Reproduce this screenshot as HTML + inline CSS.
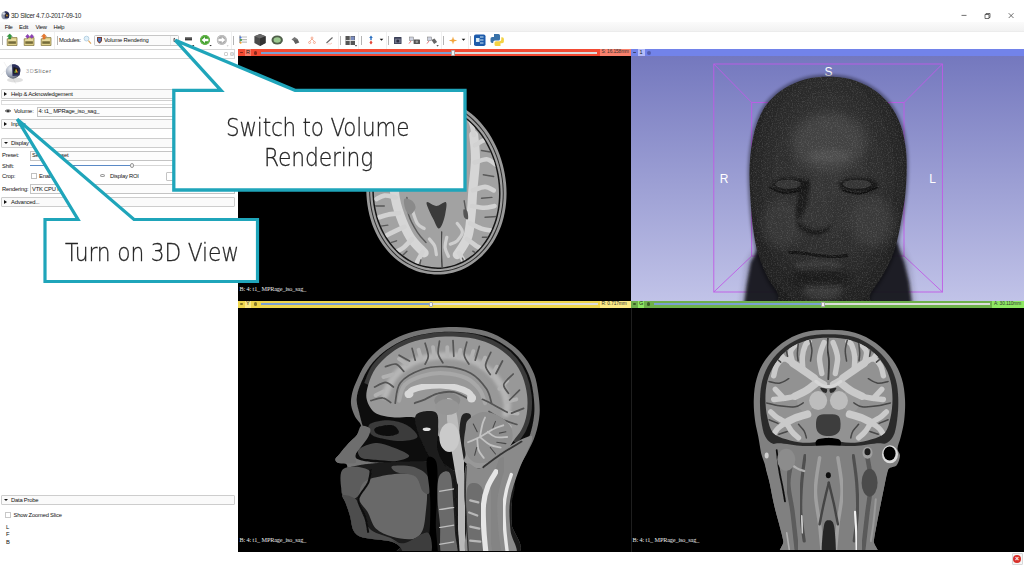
<!DOCTYPE html>
<html><head><meta charset="utf-8"><title>3D Slicer 4.7.0-2017-09-10</title>
<style>
*{margin:0;padding:0;box-sizing:border-box}
html,body{width:1024px;height:576px;overflow:hidden;background:#fff}
body{position:relative;font-family:"Liberation Sans",sans-serif;font-size:5.800px;letter-spacing:-.2px;color:#111}
.a{position:absolute}
.t{position:absolute;white-space:nowrap;line-height:1;margin-top:.8px}
.ct{margin-top:0}
#menubar{left:0;top:22px;width:1024px;height:10px;background:linear-gradient(#fbfbfb,#f1f1f1)}
.grp{position:absolute;left:.5px;width:234.500px;height:7px;border:1px solid #cdcdcd;border-radius:1px;background:#fafafa}
.inp{position:absolute;height:8px;border:1px solid #c4c4c4;background:#fcfcfc}
.bar{position:absolute;height:7px}
.view{position:absolute;background:#000;overflow:hidden}
.lbl{position:absolute;white-space:nowrap;line-height:1;font-family:"Liberation Serif",serif;font-size:6.200px;letter-spacing:-.12px;color:#ececec}
.sep{top:36px;width:1.400px;height:9px;background:#b4b4b4}
.tri-r{position:absolute;width:0;height:0;border-left:3px solid #111;border-top:2.200px solid transparent;border-bottom:2.200px solid transparent}
.tri-d{position:absolute;width:0;height:0;border-top:2.500px solid #111;border-left:2.200px solid transparent;border-right:2.200px solid transparent}
</style></head><body>

<!-- title bar -->
<svg class="a" style="left:1px;top:10px" width="9" height="10" viewBox="0 0 9 10"><circle cx="4.300" cy="5.400" r="3.900" fill="#8e96a8"/><path d="M3.600 1.500c2.500-.6 4.600 1 4.800 3.400l-.6 3-4 .3z" fill="#2b2f5a"/><path d="M4.600 3.200l2.800.8-.4 2.800-2.500.2z" fill="#222"/><path d="M5 6.300l.9-2.300 1.100 2.300z" fill="#e8a030"/><ellipse cx="3" cy="3.600" rx="1.600" ry="1.200" fill="#e4e8ee" opacity=".8"/></svg>
<div class="t" style="left:11px;top:12.200px;font-size:6.400px;letter-spacing:-.26px;color:#2a2a2a">3D Slicer 4.7.0-2017-09-10</div>
<svg class="a" style="left:955px;top:8px" width="64" height="14" viewBox="955 8 64 14"><g fill="none" stroke="#333" stroke-width=".7"><path d="M961.500 15.400h5"/><path d="M985 14.500h4v4h-4zM986 14.500v-1h4v4h-1"/><path d="M1008.700 13.200l4.800 4.800M1013.500 13.200l-4.800 4.800"/></g></svg>

<!-- menu bar -->
<div class="a" id="menubar"></div>
<div class="t" style="left:4.800px;top:24.200px;letter-spacing:-.45px">File</div>
<div class="t" style="left:19px;top:24.200px">Edit</div>
<div class="t" style="left:35.600px;top:24.200px;letter-spacing:-.4px">View</div>
<div class="t" style="left:53.500px;top:24.200px;letter-spacing:-.3px">Help</div>

<!-- toolbar -->
<div id="toolbar">
<div class="a" style="left:0;top:32px;width:1024px;height:17px;background:#fff"></div>
<div class="a" style="left:0;top:31px;width:1024px;height:1px;background:#ececec"></div>
<!-- separators -->
<div class="a sep" style="left:2px"></div><div class="a sep" style="left:57px"></div><div class="a sep" style="left:233px"></div>
<div class="a sep" style="left:340px"></div><div class="a sep" style="left:361px"></div><div class="a sep" style="left:388px"></div>
<div class="a sep" style="left:443px"></div><div class="a sep" style="left:470px"></div>
<div class="a" style="left:54px;top:32px;width:1px;height:17px;background:#f0f0f0"></div>
<div class="a" style="left:231px;top:32px;width:1px;height:17px;background:#f0f0f0"></div>
<div class="a" style="left:338px;top:32px;width:1px;height:17px;background:#f0f0f0"></div>
<div class="a" style="left:358px;top:32px;width:1px;height:17px;background:#f0f0f0"></div>
<div class="a" style="left:385.500px;top:32px;width:1px;height:17px;background:#f0f0f0"></div>
<div class="a" style="left:441px;top:32px;width:1px;height:17px;background:#f0f0f0"></div>
<div class="a" style="left:467.500px;top:32px;width:1px;height:17px;background:#f0f0f0"></div>
<svg class="a" style="left:0;top:32px" width="520" height="17" viewBox="0 32 520 17">
<!-- data folders -->
<g><path d="M7.200 38.800h3.200l.9-1.200h5.700v7.900H7.200z" fill="#e0d08a" stroke="#7d7038" stroke-width=".7"/><rect x="8.300" y="41.300" width="7.600" height="2.500" fill="#5a5228" opacity=".8"/><rect x="8.300" y="39.600" width="7.600" height=".8" fill="#f2e8b8"/></g>
<path d="M9.700 33.800l2.700 2.700h-1.500v2.400H8.500v-2.400H7z" fill="#2f9a3c" stroke="#1d6a28" stroke-width=".3"/>
<g transform="translate(17 0)"><path d="M7.200 38.800h3.200l.9-1.200h5.700v7.900H7.200z" fill="#e0d08a" stroke="#7d7038" stroke-width=".7"/><rect x="8.300" y="41.300" width="7.600" height="2.500" fill="#5a5228" opacity=".8"/><rect x="8.300" y="39.600" width="7.600" height=".8" fill="#f2e8b8"/></g><path d="M27.600 34.300l2 2.100-2 2.100-2-2.100zM31.800 34.300l2 2.100-2 2.100-2-2.100z" fill="#9040b8" stroke="#5e2880" stroke-width=".3"/>
<g transform="translate(34 0)"><path d="M7.200 38.800h3.200l.9-1.200h5.700v7.900H7.200z" fill="#e0d08a" stroke="#7d7038" stroke-width=".7"/><rect x="8.300" y="41.300" width="7.600" height="2.500" fill="#5a5228" opacity=".8"/><rect x="8.300" y="39.600" width="7.600" height=".8" fill="#f2e8b8"/></g><path d="M44 33.800l2.700 2.700h-1.500v2.600h-2.400v-2.600h-1.500z" fill="#ec7a2c" stroke="#b0501a" stroke-width=".3"/>
<!-- magnifier -->
<circle cx="86.5" cy="38.6" r="2.4" fill="#dff0fa" stroke="#a9c8dc" stroke-width=".8"/><path d="M88.4 40.6l2.6 3" stroke="#e0a860" stroke-width="1.2"/>
<!-- combobox -->
<rect x="94.5" y="35.5" width="84" height="10" rx="1" fill="#fbfbfb" stroke="#b9b9b9" stroke-width=".8"/>
<path d="M170.5 36v9" stroke="#dcdcdc" stroke-width=".6"/>
<path d="M97 37h5v3.2c0 2-2.5 3.2-2.500 3.200s-2.500-1.200-2.500-3.200z" fill="#7a4030"/><path d="M98 38h3v2.300c0 1.200-1.500 2-1.500 2s-1.500-.8-1.500-2z" fill="#4a78c8"/>
<path d="M173 39.400h2.600l-1.300-1.700zM173 40.600h2.600l-1.300 1.700z" fill="#333"/>
<!-- history -->
<rect x="185" y="37.400" width="7" height="3" fill="#3c3c3c"/><rect x="185" y="37.400" width="7" height="1" fill="#777"/>
<path d="M192 45h2.400l-1.200 1.300z" fill="#222"/>
<!-- back / forward -->
<circle cx="205" cy="40" r="5" fill="#3e9a2a"/><circle cx="205" cy="40" r="4.200" fill="none" stroke="#7bc85c" stroke-width=".8"/>
<path d="M201.600 40l3.400-3v1.800h3.400v2.400h-3.400V43z" fill="#fff"/>
<path d="M209.400 45h2.400l-1.200 1.300z" fill="#222"/>
<circle cx="221.800" cy="40" r="5" fill="#a9a9a9"/><circle cx="221.800" cy="40" r="4.200" fill="none" stroke="#d0d0d0" stroke-width=".8"/>
<path d="M225.200 40l-3.400-3v1.800h-3.400v2.400h3.400V43z" fill="#fff"/>
<path d="M226.600 45.400h2l-1 1.100z" fill="#aaa"/>
<!-- tree -->
<path d="M241.500 37h5.500M241.500 39.600h5.500M241.500 42.200h5.500" stroke="#bdbdbd" stroke-width="1.200"/><path d="M240 35.500v7.500" stroke="#444" stroke-width=".8"/>
<circle cx="240.600" cy="37.500" r="1" fill="#4a7be0"/><circle cx="241" cy="40" r="1.100" fill="#3f9a3f"/><circle cx="240.600" cy="42.800" r="1" fill="#f0a030"/>
<!-- cube -->
<path d="M260 34l5.600 2.200v6.800L260 46l-5.600-3v-6.800z" fill="#4a4a4a"/><path d="M260 34l5.600 2.200L260 38.600l-5.600-2.400z" fill="#6a6a6a"/><path d="M260 38.600V46l5.600-3v-6.800z" fill="#333"/>
<!-- oval -->
<ellipse cx="277.200" cy="40" rx="5.700" ry="4.600" fill="#4f5f4a"/><ellipse cx="277.200" cy="40" rx="3.600" ry="2.800" fill="#9cc890"/>
<!-- transforms -->
<path d="M291.500 39.500l3-2.500 3 2-3 2.500z" fill="#777"/><path d="M293.500 40.500l4-1.500 1.800 3.500-4 1.500z" fill="#5e5e5e"/>
<!-- hierarchy -->
<g fill="none" stroke="#f29a7c" stroke-width=".8"><circle cx="312" cy="38" r="1"/><circle cx="309.600" cy="42.500" r="1"/><circle cx="314.400" cy="42.500" r="1"/><path d="M312 39l-2.400 2.500M312 39l2.400 2.500"/></g>
<!-- pencil -->
<path d="M326.500 43l6-5.500" stroke="#666" stroke-width="1.100"/><path d="M327.500 44.200c1.500-1 2.500.8 4.500-1.200" stroke="#f0a090" stroke-width=".6" fill="none"/>
<!-- layout -->
<rect x="345.500" y="36" width="9.500" height="9" fill="#555"/><path d="M350.200 36v9M345.500 40.500h9.500" stroke="#e8e8e8" stroke-width=".9"/><rect x="351" y="36.500" width="3.500" height="3.500" fill="#7a8cc0"/>
<path d="M354.800 45.300h2.400l-1.200 1.300z" fill="#222"/>
<!-- crosshair arrows -->
<path d="M371 35.600l1.800 2.400h-1.100v2h-1.400v-2h-1.100z" fill="#2a6fc0"/><path d="M371 44.400l1.700-2.200h-1v-1.400h-1.400v1.400h-1z" fill="#e03a2a"/>
<path d="M379.700 38.800h3.600l-1.800 2z" fill="#111"/>
<!-- capture -->
<rect x="394" y="37" width="7.500" height="7" rx=".6" fill="#3a3f55"/><rect x="394.800" y="38.600" width="5.900" height="4.600" fill="#70748a"/><circle cx="397.800" cy="41" r="1.500" fill="#2b2f42"/>
<rect x="409.500" y="37" width="4" height="3.600" fill="#cfd3e0" stroke="#777" stroke-width=".5"/><path d="M409 43.600l2-2.600" stroke="#d04040" stroke-width=".7"/><rect x="413.600" y="39.600" width="6.400" height="4.400" rx=".6" fill="#555"/><circle cx="416.800" cy="41.800" r="1.300" fill="#999"/>
<rect x="427.500" y="37" width="4" height="3.600" fill="#cfd3e0" stroke="#777" stroke-width=".5"/><path d="M427 43.600l2-2.600" stroke="#d04040" stroke-width=".7"/><path d="M431.500 40l3-1.400 2.600 3.400-3 2z" fill="#666"/>
<path d="M436.400 45.300h2.400l-1.200 1.300z" fill="#222"/>
<!-- star -->
<path d="M453 36.400l.9 3.200 3.300.9-3.300.9-.9 3.200-.9-3.200-3.300-.9 3.300-.9z" fill="#f2a43a"/>
<path d="M461.700 38.800h3.600l-1.800 2z" fill="#111"/>
<!-- extension -->
<rect x="474" y="34.500" width="11.500" height="11.500" rx="1.800" fill="#1d5bab"/><path d="M476.500 38.500h2.500v3h-2.500zM480 37h3.500M480 40h3.500M480 43h3.500" stroke="#cfe8f4" stroke-width="1.100" fill="#e8eef6"/>
<!-- python -->
<path d="M494 34h4.500a1.500 1.500 0 0 1 1.500 1.500V39a1.500 1.500 0 0 1-1.500 1.500H495a1.800 1.800 0 0 0-1.800 1.800v.7h-.9a1.800 1.800 0 0 1-1.800-1.800v-2.400a1.800 1.800 0 0 1 1.800-1.800h1.700z" fill="#3a72a8"/>
<path d="M500.500 46H496a1.500 1.500 0 0 1-1.500-1.500V42.800A1.500 1.500 0 0 1 496 41.300h3.500a1.800 1.800 0 0 0 1.800-1.800v-2.300h.8a1.800 1.800 0 0 1 1.800 1.800v2.400a1.800 1.800 0 0 1-1.800 1.800h-1.600z" fill="#f3d244"/>
</svg>
<div class="t" style="left:59px;top:37px">Modules:</div>
<div class="t" style="left:104px;top:37px">Volume Rendering</div>
</div>

<!-- left panel -->
<div id="panel">
<!-- dock title -->
<div class="a" style="left:0;top:48.800px;width:235px;height:10.200px;border:1px solid #d6d6d6;border-left:none;background:#fff"></div>
<div class="a" style="left:223.500px;top:52px;width:4px;height:4px;border:1px solid #cfcfcf;border-radius:1px"></div>
<div class="a" style="left:230px;top:52px;width:4px;height:4px;border:1px solid #cfcfcf;border-radius:1px;font-size:4px;line-height:2px;text-align:center;color:#aaa">x</div>
<!-- logo -->
<svg class="a" style="left:0;top:60px" width="60" height="24" viewBox="0 60 60 24">
<defs><radialGradient id="lg" cx=".35" cy=".3" r=".8"><stop offset="0" stop-color="#e8ecf2"/><stop offset=".6" stop-color="#9aa3b5"/><stop offset="1" stop-color="#4c5060"/></radialGradient></defs>
<path d="M1 75l14-15M4 62l12 22" stroke="#e4e4e4" stroke-width=".5"/>
<ellipse cx="15" cy="80" rx="8" ry="2.500" fill="#000" opacity=".12"/>
<circle cx="13" cy="71.500" r="7.200" fill="url(#lg)"/>
<path d="M12 64.500c4-1 8 1.500 8.500 5.500l-1 5.500-7 .5z" fill="#2b2f5a"/>
<path d="M13.500 67l5 1.500-.8 5-4.400.3z" fill="#1a1a1a"/><path d="M14.500 72.500l1.500-4 2 4z" fill="#e8a030"/><path d="M14.300 72.600l1.200-2.600.8 2.600z" fill="#4aa84a"/>
</svg>
<div class="t" style="left:26px;top:68.500px;font-size:5.500px;letter-spacing:.6px;color:#555"><span style="color:#aaa">3D</span>Slicer</div>
<!-- help -->
<div class="grp" style="top:89px;height:10px"></div>
<div class="tri-r" style="left:4px;top:91.500px"></div>
<div class="t" style="left:11px;top:91px">Help &amp; Acknowledgement</div>
<div class="a" style="left:1px;top:99.500px;width:234px;height:5.500px;border:1px solid #dedede;border-top-color:#cfcfcf"></div>
<!-- volume -->
<svg class="a" style="left:4.500px;top:108.500px" width="6" height="4.500" viewBox="0 0 7 5"><path d="M0 2.500C1.500 .5 5.500 .5 7 2.500 5.500 4.500 1.500 4.500 0 2.500z" fill="#8a8a8a"/><circle cx="3.500" cy="2.400" r="1.300" fill="#333"/><path d="M0 2.300C1.500 .3 5.500 .3 7 2.300" stroke="#444" stroke-width=".9" fill="none"/></svg>
<div class="t" style="left:14px;top:108px">Volume:</div>
<div class="inp" style="left:36.500px;top:107px;width:198px;height:10px"></div>
<div class="t" style="left:38.500px;top:108.500px">4: t1_ MPRage_iso_sag_</div>
<!-- inputs -->
<div class="grp" style="top:119px;height:10px"></div>
<div class="tri-r" style="left:4px;top:121.500px"></div>
<div class="t" style="left:11px;top:121px">Inputs</div>
<!-- display -->
<div class="grp" style="top:138px;height:10px"></div>
<div class="tri-d" style="left:3.500px;top:141.500px"></div>
<div class="t" style="left:11px;top:140px">Display</div>
<div class="t" style="left:2px;top:152px">Preset:</div>
<div class="inp" style="left:29.500px;top:150.500px;width:205px;height:10px"></div>
<div class="t" style="left:32px;top:152px">Select a Preset</div>
<div class="t" style="left:2px;top:163px">Shift:</div>
<div class="a" style="left:30px;top:164.500px;width:102px;height:1.500px;background:#5b8ac6"></div>
<div class="a" style="left:132px;top:164.500px;width:100px;height:1.500px;background:#d6d6d6"></div>
<div class="a" style="left:129.500px;top:163px;width:4.500px;height:4.500px;border-radius:50%;border:1px solid #9a9a9a;background:#f4f4f4"></div>
<div class="t" style="left:2px;top:173px">Crop:</div>
<div class="a" style="left:30.500px;top:172.500px;width:6px;height:6px;border:1px solid #c0c0c0;background:#fff"></div>
<div class="t" style="left:39px;top:173px">Enable</div>
<div class="a" style="left:100px;top:174px;width:4.500px;height:3px;border:1px solid #999;border-radius:50%"></div>
<div class="t" style="left:110px;top:173px">Display ROI</div>
<div class="a" style="left:166px;top:171.500px;width:68px;height:9px;border:1px solid #c4c4c4;border-radius:1px"></div>
<div class="t" style="left:2px;top:186px">Rendering:</div>
<div class="inp" style="left:29.500px;top:184px;width:205px;height:10px"></div>
<div class="t" style="left:32px;top:186px">VTK CPU Ray Casting</div>
<!-- advanced -->
<div class="grp" style="top:197px;height:10px"></div>
<div class="tri-r" style="left:4px;top:199.500px"></div>
<div class="t" style="left:11px;top:199px">Advanced...</div>
<!-- data probe -->
<div class="grp" style="top:494.500px;height:10.500px"></div>
<div class="tri-d" style="left:3.500px;top:498.500px"></div>
<div class="t" style="left:11px;top:497px">Data Probe</div>
<div class="a" style="left:5px;top:511.500px;width:6px;height:6px;border:1px solid #c8c8c8;background:#fff"></div>
<div class="t" style="left:13.500px;top:512px">Show Zoomed Slice</div>
<div class="t" style="left:6px;top:524px">L</div>
<div class="t" style="left:6px;top:531.500px">F</div>
<div class="t" style="left:6px;top:539.500px">B</div>
</div>

<!-- views -->
<div id="views">
<div class="view" style="left:238px;top:56px;width:393px;height:245px"></div>
<div class="view" style="left:238px;top:308px;width:786px;height:244px"></div>
<div class="a" style="left:631px;top:56px;width:393px;height:245px;background:linear-gradient(#7478be,#c1c3e8)"></div>
<svg class="a" style="left:238px;top:308px" width="393" height="244" viewBox="238 308 393 244">
<defs><filter id="sb0" x="-10%" y="-10%" width="120%" height="120%"><feGaussianBlur stdDeviation="0.45"/></filter><filter id="sb1" x="-10%" y="-10%" width="120%" height="120%"><feGaussianBlur stdDeviation="0.7"/></filter><filter id="sb2" x="-10%" y="-10%" width="120%" height="120%"><feGaussianBlur stdDeviation="1.6"/></filter><filter id="sb3" x="-20%" y="-20%" width="140%" height="140%"><feGaussianBlur stdDeviation="3"/></filter><clipPath id="sagclip"><rect x="238" y="308" width="318" height="243"/></clipPath>
<clipPath id="sagbrain"><path d="M366.7 399.3C365.6 394.7 366.8 390 368.3 384.8C369.9 379.5 372.2 373.3 375.8 368.1C379.5 362.9 384.9 357.7 390.4 353.5C396 349.3 402.2 345.7 409.2 343.1C416.1 340.4 424.1 338.7 432.1 337.7C440.1 336.6 449.1 336.4 457.1 336.8C465.1 337.2 473.1 338.2 480 340.2C486.9 342.1 493.2 345 498.8 348.5C504.3 352 509.4 356.3 513.3 361C517.3 365.7 520.2 370.7 522.5 376.4C524.8 382.1 526.4 388.9 527.1 395.2C527.8 401.4 527.6 408.2 526.7 413.9C525.8 419.6 523.9 424.8 521.7 429.3C519.4 433.8 516.1 437 513.3 441C510.6 445 508.8 449.5 505 453.5C501.2 457.5 495.3 462.7 490.4 465.2C485.6 467.7 480 468.9 475.8 468.5C471.7 468.1 468.9 465.5 465.4 462.7C461.9 459.8 459.4 455.7 455 451.4C450.6 447.1 443.7 441.7 439.2 436.8C434.7 432 432.2 425.5 427.9 422.2C423.6 419 419.2 418.1 413.3 417.2C407.4 416.4 398.9 418 392.5 417.2C386.1 416.5 379.3 415.7 375 412.7C370.7 409.7 367.8 404 366.7 399.3Z"/></clipPath></defs>
<rect x="238" y="308" width="393" height="244" fill="#000"/>
<g clip-path="url(#sagclip)">
<path d="M355 416.4C353.3 413 351.8 409.1 351.2 405.6C350.7 402 350.9 399 351.7 395.2C352.4 391.3 353.5 387.9 355.8 382.7C358.1 377.5 361.4 369.6 365.4 363.9C369.4 358.2 374.4 353 380 348.5C385.6 344 392.2 339.9 398.8 336.8C405.3 333.8 411.9 331.8 419.6 330.2C427.2 328.6 436.3 327.6 444.6 327.2C452.9 326.9 461.6 327 469.6 328.1C477.6 329.1 485.6 330.8 492.5 333.5C499.4 336.2 505.8 340.3 511.2 344.3C516.7 348.4 521.2 352.7 525 357.7C528.8 362.7 531.9 368.4 534.2 374.3C536.4 380.2 537.4 386.5 538.3 393.1C539.2 399.7 540.1 407 539.6 413.9C539.1 420.9 537.4 428.5 535.4 434.8C533.5 441 530.6 446.1 527.9 451.4C525.3 456.8 521.9 461.6 519.6 466.8C517.3 472 515.5 476.6 514.2 482.7C512.8 488.8 512.1 496.6 511.7 503.5C511.2 510.4 511.4 515.7 511.7 524.3C511.9 533 531.1 550.4 513.3 555.6C495.6 560.8 423.9 557 405 555.6C386.1 554.1 402.4 549.2 400 546.8C397.6 544.5 395.5 542.7 390.8 541.4C386.2 540.1 377.2 539.7 372.1 538.9C367 538.2 363.5 538.3 360.4 536.8C357.3 535.4 355.1 533.6 353.3 530.2C351.6 526.7 351.2 520.4 350 516C348.8 511.6 347.2 507.3 345.8 503.5C344.4 499.7 342.2 496.2 341.7 493.1C341.1 490 342.5 487.5 342.5 484.8C342.5 482 340.9 479.2 341.7 476.4C342.4 473.6 346.5 470.2 347.1 468.1C347.7 465.9 346.9 464.4 345.4 463.5C343.9 462.6 339.6 463.4 337.9 462.7C336.2 461.9 335.1 460.4 335.4 458.9C335.7 457.5 337.4 456.6 339.6 453.9C341.8 451.3 345.9 446.2 348.8 443.1C351.6 440 354.6 438 356.7 435.2C358.8 432.3 361.5 429.1 361.2 426C361 422.9 356.7 419.8 355 416.4Z" fill="#757575" filter="url(#sb1)"/>
<path d="M360 416C358.8 409.8 356.5 404.8 356.7 399.3C356.8 393.9 358.6 389.1 360.8 383.5C363.1 377.9 366.2 371.2 370 366C373.8 360.8 378.2 356.3 383.3 352.2C388.5 348.2 394.6 344.3 400.8 341.4C407.1 338.5 413.5 336.3 420.8 334.8C428.1 333.2 436.6 332.2 444.6 331.8C452.6 331.5 461 331.7 468.8 332.7C476.5 333.6 484.2 335.2 490.8 337.7C497.4 340.2 503.3 343.9 508.3 347.7C513.3 351.4 517.4 355.5 520.8 360.2C524.3 364.8 527.1 370 529.2 375.6C531.3 381.1 532.5 387.1 533.3 393.5C534.2 399.9 534.7 407.2 534.2 413.9C533.7 420.6 532.2 427.6 530.4 433.5C528.6 439.4 526.2 444.5 523.3 449.3C520.5 454.2 517.4 459.1 513.3 462.7C509.2 466.3 505 469.1 498.8 471C492.5 472.9 483.1 474.3 475.8 474.3C468.5 474.3 461.6 473.1 455 471C448.4 468.9 443.2 463.2 436.2 461.8C429.3 460.4 422.7 462.5 413.3 462.7C404 462.8 389 463.2 380 462.7C371 462.2 363.2 461.3 359.2 459.8C355.1 458.2 355 457.3 355.8 453.5C356.7 449.7 363.5 443.1 364.2 436.8C364.9 430.6 361.2 422.2 360 416Z" fill="#101010" filter="url(#sb1)"/>
<path d="M368.3 384.8C369.6 382 372.2 373.3 375.8 368.1C379.5 362.9 384.9 357.7 390.4 353.5C396 349.3 402.2 345.7 409.2 343.1C416.1 340.4 424.1 338.7 432.1 337.7C440.1 336.6 449.1 336.4 457.1 336.8C465.1 337.2 473.1 338.2 480 340.2C486.9 342.1 493.2 345 498.8 348.5C504.3 352 509.4 356.3 513.3 361C517.3 365.7 520.2 370.7 522.5 376.4C524.8 382.1 526.4 388.9 527.1 395.2C527.8 401.4 527.6 408.2 526.7 413.9C525.8 419.6 523.9 424.8 521.7 429.3C519.4 433.8 514.7 439.1 513.3 441" fill="none" stroke="#3a3a3a" stroke-width="9" filter="url(#sb1)"/>
<path d="M347.1 468.1C353.5 465.8 365.1 463.7 380 462.7C394.9 461.6 423.8 460.4 436.2 461.8C448.8 463.2 448.4 468.9 455 471C461.6 473.1 468.5 474.3 475.8 474.3C483.1 474.3 492.4 469.6 498.8 471C505.1 472.4 512 477.2 514.2 482.7C516.3 488.1 512.1 496.6 511.7 503.5C511.2 510.4 511.4 515.7 511.7 524.3C511.9 533 531.1 550.4 513.3 555.6C495.6 560.8 423.9 557 405 555.6C386.1 554.1 402.4 549.2 400 546.8C397.6 544.5 395.5 542.7 390.8 541.4C386.2 540.1 377.2 539.7 372.1 538.9C367 538.2 363.5 538.3 360.4 536.8C357.3 535.4 355.1 533.6 353.3 530.2C351.6 526.7 351.2 520.4 350 516C348.8 511.6 347.2 507.3 345.8 503.5C344.4 499.7 342.2 496.2 341.7 493.1C341.1 490 342.5 487.5 342.5 484.8C342.5 482 340.9 479.2 341.7 476.4C342.4 473.6 340.7 470.4 347.1 468.1Z" fill="#1c1c1c" filter="url(#sb1)"/>
<g filter="url(#sb0)">
<path d="M366.7 399.3C365.6 394.7 366.8 390 368.3 384.8C369.9 379.5 372.2 373.3 375.8 368.1C379.5 362.9 384.9 357.7 390.4 353.5C396 349.3 402.2 345.7 409.2 343.1C416.1 340.4 424.1 338.7 432.1 337.7C440.1 336.6 449.1 336.4 457.1 336.8C465.1 337.2 473.1 338.2 480 340.2C486.9 342.1 493.2 345 498.8 348.5C504.3 352 509.4 356.3 513.3 361C517.3 365.7 520.2 370.7 522.5 376.4C524.8 382.1 526.4 388.9 527.1 395.2C527.8 401.4 527.6 408.2 526.7 413.9C525.8 419.6 523.9 424.8 521.7 429.3C519.4 433.8 516.1 437 513.3 441C510.6 445 508.8 449.5 505 453.5C501.2 457.5 495.3 462.7 490.4 465.2C485.6 467.7 480 468.9 475.8 468.5C471.7 468.1 468.9 465.5 465.4 462.7C461.9 459.8 459.4 455.7 455 451.4C450.6 447.1 443.7 441.7 439.2 436.8C434.7 432 432.2 425.5 427.9 422.2C423.6 419 419.2 418.1 413.3 417.2C407.4 416.4 398.9 418 392.5 417.2C386.1 416.5 379.3 415.7 375 412.7C370.7 409.7 367.8 404 366.7 399.3Z" fill="#989898"/>
<g clip-path="url(#sagbrain)">
<path d="M384.8 395.3C386.3 392.3 389.7 382.3 393.9 377.1C398 371.9 403.9 367.3 409.5 364.1C415.2 360.8 420.8 359 427.7 357.6C434.7 356.2 443.8 355.3 451.2 355.7C458.6 356.2 465.5 357.5 472 360.2C478.6 362.9 485.3 367.3 490.3 371.9C495.3 376.5 499.2 382.3 502 387.5C504.8 392.7 506.6 398.8 507.2 403.2C507.9 407.5 506.1 411.9 505.9 413.6" fill="none" stroke="#b6b6b6" stroke-width="7" stroke-linecap="round" stroke-linejoin="round" filter="url(#sb2)"/>
<path d="M375.6 395.3 L383.4 391.4M383.4 377.1 L392.6 374.5M399.1 358.9 L406.9 364.1M418.6 349.8 L421.2 358.9M433 347.1 L434.3 356.3M447.3 347.1 L447.3 355.7M460.3 349.8 L459 357.6M473.3 351.1 L470.7 360.2M485.1 357.6 L481.2 366.7M496.8 366.7 L491.6 375.8M507.2 381 L499.4 388.8M516.3 399.3 L505.9 401.9M517.6 413.6 L507.2 412.3M509.8 426.6 L502 420.1" fill="none" stroke="#b2b2b2" stroke-width="3.8" stroke-linecap="round" stroke-linejoin="round" filter="url(#sb1)"/>
<path d="M399.1 400.6C400 398 400.9 389.1 404.8 384.9C408.7 380.8 416.1 377.8 422.5 375.8C429 373.9 436 372.8 443.4 373.2C450.8 373.6 460.7 375.6 466.8 378.4C472.9 381.2 476.8 386 479.9 390.1C482.9 394.3 484.2 401 485.1 403.2" fill="none" stroke="#a8a8a8" stroke-width="4" stroke-linecap="round" stroke-linejoin="round" filter="url(#sb1)"/>
<path d="M395.2 403.2C396 399.8 396 388.4 400.4 382.8C404.7 377.3 413.6 372.5 421.2 369.8C428.8 367.1 437.7 366.1 446 366.7C454.2 367.3 464 369.5 470.7 373.2C477.5 376.9 482.9 383.8 486.4 388.8C489.8 393.8 490.7 400.8 491.6 403.2M425.1 343.2C425.7 345.4 428.3 352.8 428.3 356.3C428.3 359.7 425.7 362.8 425.1 364.1M439.5 341.2C439.3 343.2 437.6 350.1 438.2 353.7C438.7 357.3 442.1 361.3 442.9 362.8M453 340.6 L453.8 356.3M466.8 342.2C466.4 344.3 463.9 351.3 464.2 355C464.6 358.6 468.1 362.6 468.9 364.1M479.3 346.4 L475.2 360.2M490.8 352.4C489.9 354.5 485.7 361.7 485.6 365.4C485.5 369.1 489.5 373 490.3 374.5M502.5 361 L496 373.5M513.2 374C511.6 375.7 504.6 381.2 503.8 384.4C503 387.6 507.7 391.8 508.5 393.3M519.5 390.1 L509.6 400M523.6 408.4 L511.6 413.1M507.2 412.3C504.6 410.9 495.7 405.9 491.6 403.7C487.5 401.5 484 400 482.5 399.3M516.9 424.5C514.4 423.7 506.6 421.5 502 419.3C497.4 417.1 491.1 412.8 489 411.5M374.6 387C376.4 386.2 382.4 382.3 385.5 382.3C388.7 382.3 392 386.2 393.4 387M370.9 400.6C372.9 400.1 379.6 397.6 382.9 398C386.2 398.3 389.4 401.9 390.7 402.6M385.5 366.7C387.3 366.3 392.9 363.3 396 364.1C399 364.9 402.5 370.2 403.8 371.4M399.1 355.2 L409.5 361M412.1 348.4 L415.2 360.2" fill="none" stroke="#545454" stroke-width="1.7" stroke-linecap="round" stroke-linejoin="round" filter="url(#sb0)"/>
</g></g>
<ellipse cx="447.28504429390307" cy="400.5601875977071" rx="13" ry="8" fill="#8a8a8a" filter="url(#sb1)"/>
<path d="M414.7 403.2C416.5 402.5 421.2 400.9 425.1 399.3C429 397.6 433.4 394.4 438.2 393.3C442.9 392.1 448.6 391.2 453.8 392.2C459 393.2 466.8 398.1 469.4 399.3" fill="none" stroke="#555" stroke-width="1.8" stroke-linecap="round" stroke-linejoin="round" filter="url(#sb0)"/>
<path d="M408.2 394.8C408.9 394 409.3 391.5 412.1 390.1C414.9 388.7 420.4 387.3 425.1 386.5C429.9 385.7 435.6 385.3 440.8 385.4C446 385.6 451.8 386.4 456.4 387.5C461 388.7 465.4 390.5 468.1 392.2C470.8 394 471.8 397 472.6 398" fill="none" stroke="#d8d8d8" stroke-width="6.2" stroke-linecap="round" stroke-linejoin="round" filter="url(#sb0)"/>
<ellipse cx="408.98384575299633" cy="394.04637832204276" rx="4.500" ry="4" fill="#d8d8d8" filter="url(#sb0)"/>
<ellipse cx="471.5164147993747" cy="397.95466388744137" rx="4.500" ry="4.500" fill="#d8d8d8" filter="url(#sb0)"/>
<path d="M416 414.9C418.8 411.2 431.9 409.9 435.6 412.3C439.3 414.7 437.9 423.4 438.2 429.2C438.4 435.1 436.5 442.2 437.1 447.5C437.8 452.7 439.7 455.7 442.1 460.5C444.4 465.3 451.8 473.5 451.2 476.1C450.5 478.7 442 479.6 438.2 476.1C434.3 472.6 431.5 462.2 428.3 455.3C425 448.3 420.7 441.2 418.6 434.4C416.6 427.7 413.2 418.6 416 414.9Z" fill="#1a1a1a" filter="url(#sb1)"/>
<path d="M461.6 416.2C463.6 411.6 469.6 412.7 470.7 414.9C471.8 417.1 469.2 424.7 468.1 429.2C467 433.8 464.7 437.9 464.2 442.2C463.8 446.6 466 452.2 465.5 455.3C465.1 458.3 462.7 462.7 461.6 460.5C460.5 458.3 459 449.6 459 442.2C459 434.9 459.7 420.8 461.6 416.2Z" fill="#222" filter="url(#sb1)"/>
<path d="M468.1 420.1C470.7 417.3 476.4 413.2 481.2 412.3C485.9 411.4 492 412.7 496.8 414.9C501.6 417.1 507.2 421.4 509.8 425.3C512.4 429.2 513.1 434 512.4 438.3C511.8 442.7 509.2 447.7 505.9 451.4C502.7 455.1 497.7 458.5 492.9 460.5C488.1 462.4 481.4 463.7 477.2 463.1C473.1 462.4 470.3 460.1 468.1 456.6C466 453.1 464.7 446.8 464.2 442.2C463.8 437.7 464.9 432.9 465.5 429.2C466.2 425.5 465.5 422.9 468.1 420.1Z" fill="#8e8e8e" filter="url(#sb0)"/>
<path d="M468.1 442.2C470.1 441.4 475.7 439.2 479.9 437C484 434.9 489 431.2 492.9 429.2C496.8 427.3 501.6 426 503.3 425.3M479.9 437C480.3 434.9 481.6 427.3 482.5 424C483.3 420.8 484.6 418.6 485.1 417.5M479.9 437C481.6 438.3 486.8 443.1 490.3 444.9C493.8 446.6 499 447 500.7 447.5M477.2 438.3C477.5 440.3 477.5 446.8 478.6 450.1C479.6 453.3 482.9 456.6 483.8 457.9M487.7 431.8C489 432.7 492.2 436.2 495.5 437C498.7 437.9 505.3 437 507.2 437" fill="none" stroke="#c2c2c2" stroke-width="1.8" stroke-linecap="round" stroke-linejoin="round" filter="url(#sb0)"/>
<path d="M473.3 424 L477.2 431.8M495.5 421.4 L492.9 427.9M505.9 431.8 L499.4 433.1M505.9 443.6 L496.8 442.2M495.5 454 L490.3 447.5M474.6 455.3 L476.7 447.5" fill="none" stroke="#4a4a4a" stroke-width="1.1" stroke-linecap="round" stroke-linejoin="round" filter="url(#sb0)"/>
<path d="M448.6 403.2C449.1 405.3 450.8 411 451.7 416.2C452.7 421.4 453.3 427.9 454.3 434.4C455.3 440.9 456.7 449.2 457.7 455.3C458.7 461.4 459.6 466.6 460.3 470.9C461.1 475.3 461.8 479.6 462.1 481.3" fill="none" stroke="#bcbcbc" stroke-width="10.5" stroke-linecap="round" stroke-linejoin="round" filter="url(#sb0)"/>
<path d="M459.2 474.3C459.3 477.1 459.7 484.1 460 491C460.3 497.9 460.6 504.9 461.2 516C461.9 527.1 463.3 550.7 463.8 557.7" fill="none" stroke="#b8b8b8" stroke-width="8.6" stroke-linecap="round" stroke-linejoin="round" filter="url(#sb0)"/>
<ellipse cx="449.3694632621157" cy="437.558624283481" rx="10" ry="14.500" fill="#cacaca" filter="url(#sb0)"/>
<ellipse cx="447.28504429390307" cy="407.0739968733715" rx="12" ry="8" fill="#969696" filter="url(#sb0)"/>
<ellipse cx="426.7014069828035" cy="429.2209484106305" rx="4" ry="1.800" fill="#e0e0e0" filter="url(#sb0)"/>
<path d="M369.6 424.3C372.4 421.9 382.1 420 388.3 420.2C394.6 420.3 402.2 422.4 407.1 425.2C411.9 427.9 418.2 434.2 417.5 436.8C416.8 439.5 408.5 440.7 402.9 441C397.4 441.3 389.4 440 384.2 438.9C379 437.9 374.1 437.2 371.7 434.8C369.2 432.3 366.8 426.8 369.6 424.3Z" fill="#3a3a3a" filter="url(#sb1)"/>
<path d="M375.8 427.7C378.5 426.3 388.7 424.3 392.5 425.2C396.3 426 399.4 430.9 398.8 432.7C398.1 434.5 392 435.9 388.3 436C384.7 436.1 378.8 434.9 376.7 433.5C374.6 432.1 373.2 429.1 375.8 427.7Z" fill="#0a0a0a" filter="url(#sb1)"/>
<path d="M359.2 449.3C361.6 446.9 370.3 443.4 375.8 443.1C381.4 442.7 386.9 445.2 392.5 447.2C398.1 449.3 408.5 453.3 409.2 455.6C409.9 457.9 402.2 460.3 396.7 461C391.1 461.7 381.7 460.3 375.8 459.8C369.9 459.2 364 459.4 361.2 457.7C358.5 455.9 356.7 451.8 359.2 449.3Z" fill="#4a4a4a" filter="url(#sb1)"/>
<path d="M361.2 426C359 427.1 358.8 432.3 356.7 435.2C354.6 438 351.6 440 348.8 443.1C345.9 446.2 341.8 451.3 339.6 453.9C337.4 456.6 335.7 457.5 335.4 458.9C335.1 460.4 336.2 461.9 337.9 462.7C339.6 463.4 342.4 463.5 345.4 463.5C348.4 463.5 354.2 464 355.8 462.7C357.4 461.3 354 458.4 355 455.6C356 452.8 359.4 449.1 361.7 446C363.9 442.9 366.9 439.8 368.3 436.8C369.7 433.9 371.2 430.3 370 428.5C368.8 426.7 363.5 424.9 361.2 426Z" fill="#6e6e6e" filter="url(#sb1)"/>
<path d="M341.7 471C343.9 467 350.3 466.8 355 466.8C359.7 466.8 367.6 468.4 369.6 471C371.5 473.6 368.4 478.6 366.7 482.7C364.9 486.7 362.5 492 359.2 495.2C355.8 498.3 349.6 502.1 346.7 501.4C343.8 500.7 342.5 496.1 341.7 491C340.8 485.9 339.4 475 341.7 471Z" fill="#5c5c5c" filter="url(#sb1)"/>
<path d="M342.5 495.2C344.2 494.5 352.4 495.9 355.8 499.3C359.3 502.8 360.7 510.8 363.3 516C366 521.2 366.8 526.8 371.7 530.6C376.5 534.4 387.6 536.3 392.5 538.9C397.4 541.5 401.1 545.6 400.8 546C400.6 546.4 395.6 542.6 390.8 541.4C386 540.2 377.2 539.7 372.1 538.9C367 538.2 363.5 538.3 360.4 536.8C357.3 535.4 355.1 533.6 353.3 530.2C351.6 526.7 351.2 520.4 350 516C348.8 511.6 347.1 507 345.8 503.5C344.6 500 340.8 495.9 342.5 495.2Z" fill="#4e4e4e" filter="url(#sb1)"/>
<path d="M363.3 482.7C366.8 478.8 373.4 477.9 380 476.4C386.6 474.9 396.3 473.5 402.9 473.5C409.5 473.5 415.6 473.5 419.6 476.4C423.5 479.3 425.6 485.1 426.7 491C427.7 496.9 426.5 505.2 425.8 511.8C425.1 518.4 424.6 526.1 422.5 530.6C420.4 535.1 418.3 537.9 413.3 538.9C408.3 540 398.8 538.6 392.5 536.8C386.2 535.1 380 532.7 375.8 528.5C371.7 524.3 370.3 516.7 367.5 511.8C364.7 507 359.9 504.2 359.2 499.3C358.5 494.5 359.9 486.5 363.3 482.7Z" fill="#696969" filter="url(#sb1)"/>
<path d="M370.8 469.3C370.4 471.6 370.4 477.7 368.3 482.7C366.2 487.7 358.9 493.8 358.3 499.3C357.8 504.9 363.3 510.4 365 516C366.7 521.6 367.8 529.9 368.3 532.7" fill="none" stroke="#111" stroke-width="2" filter="url(#sb0)"/>
<path d="M392.5 466C395.3 465.1 407.4 465.1 413.3 466.8C419.2 468.6 425.3 472 427.9 476.4C430.6 480.8 430.1 490.7 429.2 493.1C428.3 495.5 424.8 493.8 422.5 491C420.2 488.2 419.7 479.5 415.4 476.4C411.1 473.3 400.5 474 396.7 472.2C392.8 470.5 389.7 466.9 392.5 466Z" fill="#555" filter="url(#sb1)"/>
<path d="M426.7 459.8C427.7 454.2 434.4 456.6 436.2 461.8C438.1 467 437.6 480.6 437.5 491C437.4 501.4 435.8 513.6 435.8 524.3C435.8 535.1 438.8 550.4 437.5 555.6C436.2 560.8 429.6 560.8 428.3 555.6C427.1 550.4 429.7 534.4 430 524.3C430.3 514.3 430.6 505.9 430 495.2C429.4 484.4 425.6 465.3 426.7 459.8Z" fill="#050505" filter="url(#sb1)"/>
<path d="M392.5 540.2C393.3 539.5 399.1 544.3 405 543.1C410.9 541.8 423.8 530.6 427.9 532.7C432.1 534.8 433.5 551.8 430 555.6C426.5 559.4 412.1 557 407.1 555.6C402.1 554.1 402.4 549.4 400 546.8C397.6 544.3 391.7 540.8 392.5 540.2Z" fill="#3e3e3e" filter="url(#sb1)"/>
<path d="M439.2 476.4C441.2 472.1 447.6 469 450 473.5C452.4 478 452.5 493.6 453.3 503.5C454.2 513.4 454.4 524 455 532.7C455.6 541.3 459.3 551.8 457.1 555.6C454.9 559.4 444.5 560.8 441.7 555.6C438.8 550.4 440.7 533.7 440 524.3C439.3 515 437.6 507.3 437.5 499.3C437.4 491.3 437.1 480.7 439.2 476.4Z" fill="#6a6a6a" filter="url(#sb0)"/>
<path d="M439.1666666666667 491.4166666666667L454.1666666666667 488.9166666666667" stroke="#c0c0c0" stroke-width="1.300" filter="url(#sb0)"/>
<path d="M439.1666666666667 509.75L454.1666666666667 507.25" stroke="#c0c0c0" stroke-width="1.300" filter="url(#sb0)"/>
<path d="M439.1666666666667 527.6666666666667L454.1666666666667 525.1666666666667" stroke="#c0c0c0" stroke-width="1.300" filter="url(#sb0)"/>
<path d="M439.1666666666667 544.3333333333334L454.1666666666667 541.8333333333334" stroke="#c0c0c0" stroke-width="1.300" filter="url(#sb0)"/>
<path d="M454.2 474.3C454.4 479.2 455.3 493.8 455.8 503.5C456.4 513.2 456.9 524 457.5 532.7C458.1 541.3 458.9 551.8 459.2 555.6" fill="none" stroke="#161616" stroke-width="1.500" filter="url(#sb0)"/>
<path d="M465 476.4C465.1 480.9 465.4 494.1 465.8 503.5C466.3 512.9 467 524 467.5 532.7C468 541.3 468.5 551.8 468.8 555.6" fill="none" stroke="#161616" stroke-width="1.500" filter="url(#sb0)"/>
<path d="M466.6 464.2C469.2 460.5 474.6 470.2 480.3 468.2C485.9 466.2 493 457.1 500.4 452.1C507.8 447 519.3 440.2 524.6 438C529.9 435.8 533.1 433.6 532.2 439C531.3 444.4 522.6 460 518.9 470.2C515.2 480.4 511.5 490.3 510.1 500.4C508.7 510.5 509.7 521.4 510.5 530.6C511.2 539.8 521.5 551.6 514.5 555.8C507.4 560 476 561.6 468.2 555.8C460.3 549.9 468 531.4 467.4 520.5C466.8 509.6 464.7 499.7 464.6 490.3C464.4 480.9 464 467.9 466.6 464.2Z" fill="#8a8a8a" filter="url(#sb1)"/>
<path d="M467.2 488.3C468.8 482.1 473.6 482.6 476.2 483.3C478.9 484 482.4 486.1 483.3 492.3C484.1 498.6 481.3 510 481.3 520.5C481.3 531.1 485.3 549.9 483.3 555.8C481.3 561.6 472 561.6 469.2 555.8C466.4 549.9 466.9 531.8 466.6 520.5C466.2 509.3 465.6 494.5 467.2 488.3Z" fill="#6e6e6e" filter="url(#sb1)"/>
<path d="M470.2 500.4 L478.3 502.4M469.2 512.5 L477.2 515.5M470.2 526.6 L479.3 528.6M470.2 540.7 L480.3 541.7" fill="none" stroke="#b8b8b8" stroke-width="2.2" stroke-linecap="round" stroke-linejoin="round" filter="url(#sb1)"/>
<path d="M483.3 467.2C486.1 465.1 494 458.8 500.4 454.5C506.8 450.2 518 443.8 521.5 441.6" fill="none" stroke="#343434" stroke-width="1.8" stroke-linecap="round" stroke-linejoin="round" filter="url(#sb0)"/>
<path d="M502.8 461.7C501.8 464.8 498.4 473.8 496.8 480.3C495.1 486.7 493.4 492 492.9 500.4C492.5 508.8 493.2 521.2 494 530.6C494.7 540 497 552.4 497.6 556.8" fill="none" stroke="#848484" stroke-width="9" stroke-linecap="round" stroke-linejoin="round" filter="url(#sb0)"/>
<path d="M496 471.8C494.6 474.2 490 480.9 487.9 486.3C485.8 491.7 484.2 497 483.5 504.4C482.8 511.8 483.4 521.9 483.9 530.6C484.4 539.3 485.9 552.4 486.3 556.8" fill="none" stroke="#e6e6e6" stroke-width="5.2" stroke-linecap="round" stroke-linejoin="round" filter="url(#sb0)"/>
<path d="M511.3 474.6C510.5 477.2 507.6 485 506.4 490.3C505.2 495.6 504.3 499.7 504 506.4C503.8 513.1 504.2 522.2 504.8 530.6C505.5 539 507.3 552.4 507.8 556.8" fill="none" stroke="#e8e8e8" stroke-width="3.4" stroke-linecap="round" stroke-linejoin="round" filter="url(#sb0)"/>
<path d="M466.2 466.2C466 471.9 465 485.3 465.4 500.4C465.8 515.5 468.1 547.4 468.6 556.8" fill="none" stroke="#303030" stroke-width="1.2" stroke-linecap="round" stroke-linejoin="round" filter="url(#sb0)"/>
</g></svg>
<svg class="a" style="left:631px;top:308px" width="393" height="244" viewBox="631 308 393 244">
<defs><clipPath id="corclip"><rect x="631" y="308" width="393" height="242"/></clipPath><clipPath id="corbrain"><path d="M828.8 337.7C836 337.7 844 338.2 850.8 340.2C857.6 342.1 864.2 345.4 869.6 349.3C875 353.3 879.9 358.7 883.3 363.9C886.8 369.1 888.9 374.7 890.4 380.6C891.9 386.5 892.5 393.1 892.5 399.3C892.5 405.6 891.7 412.5 890.4 418.1C889.2 423.6 888.1 429.1 885 432.7C881.9 436.2 876.7 437.7 871.7 439.3C866.7 441 860.2 442.2 855 442.7C849.8 443.1 844.8 442.7 840.4 441.8C836 441 832.6 437.7 828.8 437.7C824.9 437.7 821.8 441 817.5 441.8C813.2 442.7 808.1 443.1 802.9 442.7C797.7 442.2 791.2 441 786.2 439.3C781.2 437.7 776 436.2 772.9 432.7C769.8 429.1 768.8 423.6 767.5 418.1C766.2 412.5 765.4 405.6 765.4 399.3C765.4 393.1 765.9 386.5 767.5 380.6C769.1 374.7 771.5 369.1 775 363.9C778.5 358.7 783 353.3 788.3 349.3C793.7 345.4 800.3 342.1 807.1 340.2C813.8 338.2 821.5 337.7 828.8 337.7Z"/></clipPath></defs>
<rect x="631" y="308" width="393" height="244" fill="#000"/>
<g clip-path="url(#corclip)">
<path d="M828.8 329.8C837.4 329.8 847.2 330.4 855 332.7C862.8 334.9 869.6 338.6 875.8 343.1C882.1 347.6 888.2 353.8 892.5 359.8C896.8 365.7 899.6 371.9 901.7 378.5C903.8 385.1 904.6 392.4 905 399.3C905.4 406.3 904.9 413.9 904.2 420.2C903.5 426.4 901.9 432.1 900.8 436.8C899.7 441.6 897.6 445.4 897.5 448.5C897.4 451.6 900.1 452.8 900 455.6C899.9 458.4 898.6 462.9 896.7 465.2C894.7 467.5 890.3 466.4 888.3 469.3C886.4 472.3 886.2 477 885 482.7C883.8 488.4 882.2 496.6 880.8 503.5C879.4 510.4 877.8 518.1 876.7 524.3C875.5 530.6 874.6 535.4 873.8 541C872.9 546.6 886.3 554.9 871.7 557.7C857.1 560.4 801 560.4 786.2 557.7C771.5 554.9 784.5 546.6 783.3 541C782.2 535.4 780.8 530.6 779.2 524.3C777.6 518.1 775.3 510.4 773.8 503.5C772.2 496.6 771 488.9 769.6 482.7C768.2 476.4 766.8 470.9 765.4 466C764 461.1 762.4 458.4 761.2 453.5C760.1 448.6 759.4 442.4 758.3 436.8C757.3 431.3 755.8 426.4 755 420.2C754.2 413.9 753.5 406.3 753.8 399.3C754 392.4 754.7 385.1 756.7 378.5C758.6 371.9 761.2 365.7 765.4 359.8C769.7 353.8 775.8 347.6 782.1 343.1C788.3 338.6 795.1 334.9 802.9 332.7C810.7 330.4 820.1 329.8 828.8 329.8Z" fill="#808080" filter="url(#sb1)"/>
<path d="M828.8 334.3C836.8 334.3 846 334.8 853.3 336.8C860.7 338.9 867.2 342.6 872.9 346.8C878.7 351.1 884.1 356.8 887.9 362.2C891.7 367.7 894.1 373.6 895.8 379.8C897.6 385.9 898.1 392.6 898.3 399.3C898.5 406.1 898 413.9 897.1 420.2C896.2 426.4 895.4 432.7 892.9 436.8C890.4 440.9 888.4 442.9 882.1 444.8C875.8 446.6 863.9 447.3 855 447.7C846.1 448 837.4 446.8 828.8 446.8C820.1 446.8 811.7 448 802.9 447.7C794.1 447.3 782.1 446.6 775.8 444.8C769.6 442.9 767.8 440.9 765.4 436.8C763 432.7 762.2 426.4 761.2 420.2C760.3 413.9 759.8 406.1 760 399.3C760.2 392.6 760.8 385.9 762.5 379.8C764.2 373.6 766.7 367.7 770.4 362.2C774.2 356.8 779.2 351.1 785 346.8C790.8 342.6 797.7 338.9 805 336.8C812.3 334.8 820.7 334.3 828.8 334.3Z" fill="#2c2c2c" filter="url(#sb1)"/>
<g filter="url(#sb0)">
<path d="M828.8 337.7C836 337.7 844 338.2 850.8 340.2C857.6 342.1 864.2 345.4 869.6 349.3C875 353.3 879.9 358.7 883.3 363.9C886.8 369.1 888.9 374.7 890.4 380.6C891.9 386.5 892.5 393.1 892.5 399.3C892.5 405.6 891.7 412.5 890.4 418.1C889.2 423.6 888.1 429.1 885 432.7C881.9 436.2 876.7 437.7 871.7 439.3C866.7 441 860.2 442.2 855 442.7C849.8 443.1 844.8 442.7 840.4 441.8C836 441 832.6 437.7 828.8 437.7C824.9 437.7 821.8 441 817.5 441.8C813.2 442.7 808.1 443.1 802.9 442.7C797.7 442.2 791.2 441 786.2 439.3C781.2 437.7 776 436.2 772.9 432.7C769.8 429.1 768.8 423.6 767.5 418.1C766.2 412.5 765.4 405.6 765.4 399.3C765.4 393.1 765.9 386.5 767.5 380.6C769.1 374.7 771.5 369.1 775 363.9C778.5 358.7 783 353.3 788.3 349.3C793.7 345.4 800.3 342.1 807.1 340.2C813.8 338.2 821.5 337.7 828.8 337.7Z" fill="#929292"/>
<g clip-path="url(#corbrain)">
<ellipse cx="805.981941309255" cy="400.62076749435664" rx="9" ry="11" fill="#9a9a9a" filter="url(#sb1)"/>
<ellipse cx="851.1286681715576" cy="400.62076749435664" rx="9" ry="11" fill="#9a9a9a" filter="url(#sb1)"/>
<path d="M824.5 384.1C822.8 383.1 817.9 380.4 814.3 378C810.8 375.7 806.6 372.6 803 370.1C799.5 367.7 796.1 365.3 792.9 363.4C789.7 361.5 786.6 358.5 783.9 358.9C781.2 359.2 778.3 362.8 776.6 365.6C774.9 368.5 774.2 374.1 773.7 375.8M832.6 384.1C834.3 383.1 839.2 380.4 842.8 378C846.4 375.7 850.5 372.6 854.1 370.1C857.6 367.7 861 365.3 864.2 363.4C867.4 361.5 870.5 358.5 873.3 358.9C876 359.2 878.8 362.8 880.5 365.6C882.2 368.5 882.9 374.1 883.4 375.8M803 370.1C802.9 367.9 802 360.7 802.4 356.6C802.7 352.5 804.2 347.9 805.3 345.3C806.4 342.8 808.5 341.9 809.1 341.3M854.1 370.1C854.2 367.9 855.1 360.7 854.7 356.6C854.4 352.5 852.9 347.9 851.8 345.3C850.7 342.8 848.6 341.9 848 341.3M792.9 363.4C792.5 361.5 790.3 355.2 790.6 352.1C791 349 794.4 346.1 795.1 344.9M864.2 363.4C864.6 361.5 866.9 355.2 866.5 352.1C866.1 349 862.7 346.1 862 344.9M783.9 358.9 L779.8 353.2M873.3 358.9 L877.3 353.2M817.7 381.9C815.8 383.3 810.2 388.1 806.4 390.5C802.7 392.8 798.9 394.8 795.1 396.1C791.4 397.4 787.4 397.8 783.9 398.4C780.3 398.9 775.4 399.3 773.7 399.5M839.4 381.9C841.3 383.3 846.9 388.1 850.7 390.5C854.4 392.8 858.2 394.8 862 396.1C865.7 397.4 869.7 397.8 873.3 398.4C876.8 398.9 881.7 399.3 883.4 399.5M783.9 398.4 L775.3 389.3M873.3 398.4 L881.8 389.3M807.6 414.2C805.5 414.8 798.7 416.6 795.1 418C791.6 419.4 789.1 420.6 786.1 422.5C783.1 424.4 779.3 426.9 777.1 429.3C774.8 431.7 773.3 435.5 772.6 436.7M849.5 414.2C851.6 414.8 858.4 416.6 862 418C865.5 419.4 868 420.6 871 422.5C874 424.4 877.8 426.9 880 429.3C882.3 431.7 883.8 435.5 884.5 436.7M786.1 422.5C784.6 421.7 779.6 419.3 777.1 417.6C774.5 415.8 771.8 412.8 770.8 411.9M871 422.5C872.5 421.7 877.5 419.3 880 417.6C882.6 415.8 885.3 412.8 886.3 411.9M786.1 422.5C787.1 424 789.7 429 791.8 431.5C793.8 434.1 797.4 436.8 798.5 437.9M871 422.5C870.1 424 867.4 429 865.3 431.5C863.3 434.1 859.7 436.8 858.6 437.9M821.8 373.5C821.4 371.1 819.6 362.8 819.5 358.9C819.5 354.9 820.6 352.5 821.3 349.8C822.1 347.1 823.6 343.8 824 342.6M835.3 373.5C835.7 371.1 837.5 362.8 837.6 358.9C837.7 354.9 836.5 352.5 835.8 349.8C835 347.1 833.5 343.8 833.1 342.6" fill="none" stroke="#cacaca" stroke-width="5.4" stroke-linecap="round" stroke-linejoin="round" filter="url(#sb1)"/>
<path d="M814.3 378C812.5 376.7 806.6 372.6 803 370.1C799.5 367.7 794.6 364.5 792.9 363.4M842.8 378C844.7 376.7 850.5 372.6 854.1 370.1C857.6 367.7 862.5 364.5 864.2 363.4M817.7 381.9C815.8 383.3 810.2 388.1 806.4 390.5C802.7 392.8 797 395.2 795.1 396.1M839.4 381.9C841.3 383.3 846.9 388.1 850.7 390.5C854.4 392.8 860.1 395.2 862 396.1M807.6 414.2C805.5 414.8 798.7 416.6 795.1 418C791.6 419.4 787.6 421.8 786.1 422.5M849.5 414.2C851.6 414.8 858.4 416.6 862 418C865.5 419.4 869.5 421.8 871 422.5" fill="none" stroke="#cacaca" stroke-width="7.5" stroke-linecap="round" stroke-linejoin="round" filter="url(#sb1)"/>
<ellipse cx="818.1715575620767" cy="400.62076749435664" rx="9" ry="9.500" fill="#bdbdbd" filter="url(#sb1)"/>
<ellipse cx="838.9390519187359" cy="400.62076749435664" rx="9" ry="9.500" fill="#bdbdbd" filter="url(#sb1)"/>
<path d="M809.1 337.4C809.6 339.5 811.6 345.9 811.9 349.8C812.1 353.8 810.7 359.2 810.5 361.1M848 337.4C847.5 339.5 845.5 345.9 845.3 349.8C845 353.8 846.4 359.2 846.6 361.1M798.5 341.3C798.3 343.2 797.5 350 797.4 353.2C797.3 356.5 798 359.4 798.1 360.7M858.6 341.3C858.8 343.2 859.6 350 859.7 353.2C859.8 356.5 859.1 359.4 859 360.7M785.7 347.6 L787.5 356.2M871.4 347.6 L869.6 356.2M775.3 357.7 L780.7 362.2M881.8 357.7 L876.4 362.2M769 381.4C770.7 381.7 776 383.7 779.3 383.2C782.7 382.8 787.2 379.5 788.8 378.7M888.1 381.4C886.4 381.7 881.1 383.7 877.8 383.2C874.5 382.8 869.9 379.5 868.3 378.7M766.7 402.9C768.8 403.4 774.6 405.2 779.3 405.8C784.1 406.5 791.2 407.2 795.1 406.7C799.1 406.2 801.9 403.5 803.3 402.9M890.4 402.9C888.3 403.4 882.5 405.2 877.8 405.8C873 406.5 866 407.2 862 406.7C858 406.2 855.2 403.5 853.8 402.9M769 419.8 L778 423.4M888.1 419.8 L879.1 423.4M778.9 434.3 L787.2 431.5M878.2 434.3 L869.9 431.5M798.5 424.3C799.5 425.5 802.9 428.8 804.2 431.1C805.5 433.4 806.1 436.7 806.4 437.9M858.6 424.3C857.6 425.5 854.3 428.8 852.9 431.1C851.6 433.4 851.1 436.7 850.7 437.9" fill="none" stroke="#484848" stroke-width="1.5" stroke-linecap="round" stroke-linejoin="round" filter="url(#sb0)"/>
<path d="M828.3 334C828.2 336.3 827.3 343.1 827.4 347.6C827.5 352.1 828.9 355.9 829 361.1C829.2 366.4 828.4 376.2 828.3 379.2" fill="none" stroke="#3a3a3a" stroke-width="1.8" stroke-linecap="round" stroke-linejoin="round" filter="url(#sb0)"/>
<path d="M815.9 381.4C817 382.1 820.2 384.6 822.2 385.5C824.3 386.4 826.3 386.6 828.3 386.6C830.4 386.6 832.4 386.4 834.4 385.5C836.5 384.6 839.7 382.1 840.7 381.4" fill="none" stroke="#d6d6d6" stroke-width="3.2" stroke-linecap="round" stroke-linejoin="round" filter="url(#sb0)"/>
<path d="M820.4 387.8C821.1 387.3 825.8 388.3 826.7 389.1C827.7 389.9 827 392.3 826.3 392.7C825.6 393.2 823.7 392.6 822.7 391.8C821.7 391 819.8 388.2 820.4 387.8Z" fill="#2c2c2c"/>
<path d="M836.2 387.8C835.6 387.3 830.9 388.3 829.9 389.1C828.9 389.9 829.7 392.3 830.4 392.7C831 393.2 833 392.6 834 391.8C835 391 836.9 388.2 836.2 387.8Z" fill="#2c2c2c"/>
<path d="M828.3 390.5 L828.3 414.2" fill="none" stroke="#3a3a3a" stroke-width="1.6" stroke-linecap="round" stroke-linejoin="round" filter="url(#sb0)"/>
<path d="M817.7 416.4C819.7 414 824.8 414.2 828.3 414.2C831.9 414.2 836.9 414 838.9 416.4C840.9 418.9 840.8 425.8 840.3 428.8C839.8 431.8 837.8 433.3 835.8 434.5C833.8 435.7 830.8 436.1 828.3 436.1C825.8 436.1 822.9 435.7 820.9 434.5C818.9 433.3 816.9 431.8 816.4 428.8C815.8 425.8 815.7 418.9 817.7 416.4Z" fill="#3e3e3e" filter="url(#sb1)"/>
</g></g>
<path d="M816.7 440.2C818.5 438.6 824.9 438.1 828.8 438.1C832.6 438.1 838.3 438.6 840 440.2C841.7 441.8 841 446.1 839.2 447.7C837.3 449.2 832.4 449.3 828.8 449.3C825.1 449.3 819.5 449.2 817.5 447.7C815.5 446.1 814.8 441.8 816.7 440.2Z" fill="#060606" filter="url(#sb0)"/>
<path d="M765.8 451.4C767.6 447.7 769.7 444.4 775.8 443.5C782 442.6 794.1 445.7 802.9 446C811.7 446.3 820.1 445.2 828.8 445.2C837.4 445.2 846.1 446.3 855 446C863.9 445.7 876 442.6 882.1 443.5C888.1 444.4 890.8 444.9 891.2 451.4C891.7 457.9 886.7 474 885 482.7C883.3 491.3 882.2 496.6 880.8 503.5C879.4 510.4 877.8 518.1 876.7 524.3C875.5 530.6 874.6 535.4 873.8 541C872.9 546.6 886.3 554.9 871.7 557.7C857.1 560.4 801 560.4 786.2 557.7C771.5 554.9 784.5 546.6 783.3 541C782.2 535.4 780.8 530.6 779.2 524.3C777.6 518.1 775.3 510.4 773.8 503.5C772.2 496.6 771 488.9 769.6 482.7C768.2 476.4 766 471.2 765.4 466C764.8 460.8 764.1 455.2 765.8 451.4Z" fill="#808080" filter="url(#sb1)"/>
<path d="M776.7 450.2C777.1 453.5 778.2 464.1 779.2 470.2C780.1 476.3 781.5 481.6 782.5 486.8C783.5 492 784.6 499 785 501.4" fill="none" stroke="#101010" stroke-width="1.8" stroke-linecap="round" filter="url(#sb0)"/>
<path d="M805 455.6C804.4 460.1 802.4 473.3 801.7 482.7C801 492 800.4 502.1 800.8 511.8C801.2 521.6 803.6 536.1 804.2 541" fill="none" stroke="#505050" stroke-width="3.2" stroke-linecap="round" filter="url(#sb0)"/>
<path d="M853.3 455.6C853.9 460.1 856 473.3 856.7 482.7C857.4 492 857.9 502.1 857.5 511.8C857.1 521.6 854.7 536.1 854.2 541" fill="none" stroke="#505050" stroke-width="3.2" stroke-linecap="round" filter="url(#sb0)"/>
<path d="M792.5 457.7C791.8 461.8 788.3 473.6 788.3 482.7C788.3 491.7 791.1 500.7 792.5 511.8C793.9 522.9 796 543.1 796.7 549.3" fill="none" stroke="#5c5c5c" stroke-width="4.5" stroke-linecap="round" filter="url(#sb0)"/>
<path d="M867.5 457.7C868.1 461.8 870.8 473.6 870.8 482.7C870.8 491.7 868.8 500.7 867.5 511.8C866.2 522.9 864 543.1 863.3 549.3" fill="none" stroke="#5a5a5a" stroke-width="4.5" stroke-linecap="round" filter="url(#sb0)"/>
<path d="M819.6 457.7C818.9 463.2 815.4 479.9 815.4 491C815.4 502.1 818.4 513.6 819.6 524.3C820.8 535.1 822 550.4 822.5 555.6" fill="none" stroke="#a0a0a0" stroke-width="3.5" stroke-linecap="round" filter="url(#sb0)"/>
<path d="M837.9 457.7C838.6 463.2 842.1 479.9 842.1 491C842.1 502.1 839.1 513.6 837.9 524.3C836.7 535.1 835.5 550.4 835 555.6" fill="none" stroke="#a0a0a0" stroke-width="3.5" stroke-linecap="round" filter="url(#sb0)"/>
<path d="M828.8 482.7C827.9 486.1 825.3 496.6 823.8 503.5C822.2 510.4 820.3 520.9 819.6 524.3" fill="none" stroke="#444" stroke-width="2.4" stroke-linecap="round" filter="url(#sb0)"/>
<path d="M828.8 482.7C829.6 486.1 832.2 496.6 833.8 503.5C835.3 510.4 837.2 520.9 837.9 524.3" fill="none" stroke="#444" stroke-width="2.4" stroke-linecap="round" filter="url(#sb0)"/>
<path d="M785 459.8C786.9 461.1 793.5 466.2 796.7 468.1C799.9 470 802.9 470.5 804.2 471" fill="none" stroke="#b0b0b0" stroke-width="2.2" stroke-linecap="round" filter="url(#sb0)"/>
<path d="M855 511.8C855.2 515.3 856 526.1 856.2 532.7C856.5 539.3 856.6 548.3 856.7 551.4" fill="none" stroke="#f0f0f0" stroke-width="2.2" stroke-linecap="round" filter="url(#sb0)"/>
<path d="M801.7 516 L802.5 532.7" fill="none" stroke="#c8c8c8" stroke-width="1.8" stroke-linecap="round" filter="url(#sb0)"/>
<path d="M786.7 532.7 L789.2 549.3" fill="none" stroke="#b0b0b0" stroke-width="1.6" stroke-linecap="round" filter="url(#sb0)"/>
<path d="M875.8 499.3C875.4 503.5 874.2 517.4 873.3 524.3C872.5 531.3 871.2 538.2 870.8 541" fill="none" stroke="#9a9a9a" stroke-width="2.0" stroke-linecap="round" filter="url(#sb0)"/>
<ellipse cx="786.25" cy="459.75" rx="9" ry="11" fill="#8c8c8c" filter="url(#sb1)"/>
<ellipse cx="869.5833333333334" cy="482.6666666666667" rx="8" ry="14" fill="#4c4c4c" filter="url(#sb1)"/>
<ellipse cx="828.3333333333334" cy="475.1666666666667" rx="2.500" ry="3" fill="#0a0a0a" filter="url(#sb0)"/>
<path d="M823.8 526.4C824.8 520.2 827 520.2 828.8 520.2C830.5 520.2 833.1 520.2 834.2 526.4C835.2 532.7 836.9 552.5 835 557.7C833.1 562.9 824.4 562.9 822.5 557.7C820.6 552.5 822.7 532.7 823.8 526.4Z" fill="#262626" filter="url(#sb1)"/>
<ellipse cx="890.0" cy="454.33333333333337" rx="8" ry="9" fill="#dcdcdc" filter="url(#sb0)"/>
<ellipse cx="889.5833333333334" cy="453.5" rx="6" ry="7" fill="#050505" filter="url(#sb0)"/>
<ellipse cx="867.5" cy="452.6666666666667" rx="5" ry="6" fill="#a0a0a0" filter="url(#sb0)"/>
<ellipse cx="867.5" cy="451.83333333333337" rx="3" ry="3.500" fill="#1a1a1a" filter="url(#sb0)"/>
<ellipse cx="766.6666666666666" cy="455.58333333333337" rx="2" ry="3" fill="#d0d0d0" filter="url(#sb0)"/>
</g></svg>
<svg class="a" style="left:238px;top:56px" width="393" height="245" viewBox="238 56 393 245">
<defs><clipPath id="axbrain"><path d="M432.2 107.6C436.6 107.4 441.1 107.8 445.5 108.9C449.9 110 454.3 111.8 458.5 114.2C462.6 116.6 466.7 119.6 470.5 123.2C474.2 126.7 477.8 130.8 481 135.3C484.2 139.8 487.1 144.8 489.5 150.1C491.9 155.3 494 161 495.5 166.7C497 172.4 498.1 178.5 498.6 184.4C499.1 190.3 499.2 196.4 498.6 202.2C498.1 208 497 213.9 495.4 219.3C493.8 224.7 491.6 230 489 234.8C486.4 239.6 483.3 244.1 479.8 247.9C476.3 251.8 472.3 255.3 468.1 258.1C463.9 260.9 459.3 263.1 454.7 264.7C450 266.2 445.1 267.2 440.2 267.4C435.3 267.6 430.3 267.2 425.5 266.1C420.7 265 415.9 263.3 411.5 260.9C407.1 258.5 402.7 255.5 398.9 252C395 248.5 391.4 244.3 388.4 239.8C385.3 235.3 382.6 230.3 380.5 225C378.3 219.8 376.7 214.1 375.6 208.4C374.4 202.6 373.8 196.6 373.8 190.6C373.7 184.7 374.2 178.6 375.1 172.7C376.1 166.9 377.6 161 379.4 155.6C381.3 150.1 383.7 144.8 386.4 140C389.1 135.3 392.3 130.8 395.7 126.9C399.1 123 402.8 119.6 406.7 116.8C410.6 114 414.8 111.8 419.1 110.3C423.3 108.7 427.8 107.8 432.2 107.6Z"/></clipPath></defs>
<rect x="238" y="56" width="393" height="245" fill="#000"/>
<path d="M431.8 99.5C436.8 99.3 441.8 99.8 446.7 101C451.6 102.2 456.6 104.1 461.2 106.7C465.9 109.3 470.5 112.7 474.7 116.5C478.9 120.3 482.9 124.9 486.4 129.8C490 134.7 493.2 140.2 495.9 146C498.6 151.7 500.9 157.9 502.6 164.2C504.3 170.4 505.5 177 506.1 183.5C506.7 190 506.7 196.6 506.1 203C505.5 209.4 504.3 215.8 502.5 221.7C500.7 227.7 498.2 233.5 495.3 238.7C492.4 244 488.8 248.9 484.9 253.1C481 257.4 476.5 261.2 471.8 264.2C467.2 267.3 462 269.8 456.8 271.5C451.6 273.2 446 274.2 440.6 274.5C435.1 274.8 429.5 274.3 424.2 273.1C418.8 271.9 413.4 270 408.4 267.4C403.5 264.8 398.6 261.5 394.3 257.7C390 253.8 386 249.3 382.6 244.4C379.1 239.5 376.1 233.9 373.7 228.2C371.4 222.4 369.5 216.2 368.3 209.9C367 203.6 366.4 197 366.3 190.5C366.2 184 366.8 177.3 367.8 170.9C368.9 164.5 370.6 158.1 372.7 152.1C374.8 146.2 377.5 140.3 380.5 135.1C383.5 129.9 387.1 124.9 390.9 120.7C394.7 116.4 398.9 112.7 403.3 109.6C407.7 106.6 412.4 104.1 417.1 102.4C421.9 100.8 426.9 99.8 431.8 99.5Z" fill="#9a9a9a" filter="url(#sb0)"/>
<path d="M432 102.6C436.7 102.4 441.6 102.9 446.3 104C451 105.2 455.7 107.1 460.2 109.6C464.7 112.1 469.1 115.3 473.1 119.1C477.1 122.8 481 127.2 484.4 132C487.8 136.7 490.9 142 493.5 147.6C496.1 153.1 498.3 159.2 500 165.2C501.6 171.3 502.8 177.7 503.3 183.9C503.9 190.2 503.9 196.7 503.3 202.8C502.7 209 501.5 215.2 499.8 221C498.1 226.7 495.8 232.3 493 237.4C490.1 242.5 486.7 247.2 483 251.3C479.2 255.5 475 259.1 470.5 262.1C466 265 461 267.4 456 269.1C451 270.7 445.7 271.7 440.4 272C435.2 272.3 429.8 271.8 424.7 270.7C419.5 269.5 414.4 267.6 409.6 265.1C404.8 262.6 400.2 259.4 396 255.7C391.9 252 388 247.6 384.7 242.8C381.4 238.1 378.5 232.7 376.3 227.1C374 221.6 372.2 215.5 371 209.5C369.8 203.4 369.2 197 369.1 190.7C369 184.4 369.5 177.9 370.6 171.7C371.6 165.5 373.2 159.3 375.2 153.5C377.2 147.7 379.8 142.1 382.7 137C385.6 132 389 127.2 392.7 123.1C396.3 119 400.4 115.3 404.6 112.4C408.8 109.4 413.3 107.1 417.9 105.4C422.4 103.8 427.2 102.8 432 102.6Z" fill="#2a2a2a" filter="url(#sb0)"/>
<path d="M432 103.6C436.7 103.4 441.5 103.8 446.1 105C450.7 106.2 455.4 108 459.8 110.5C464.2 113 468.6 116.2 472.5 119.9C476.5 123.6 480.3 127.9 483.7 132.6C487 137.3 490.1 142.6 492.7 148.1C495.2 153.5 497.4 159.5 499 165.5C500.6 171.5 501.8 177.8 502.3 184C502.9 190.2 502.9 196.6 502.3 202.7C501.7 208.8 500.6 214.9 498.9 220.6C497.2 226.3 494.9 231.8 492.1 236.8C489.4 241.8 486 246.5 482.3 250.6C478.6 254.7 474.4 258.3 470 261.2C465.5 264.1 460.6 266.5 455.7 268.1C450.8 269.8 445.5 270.7 440.4 271C435.2 271.3 429.9 270.8 424.9 269.7C419.8 268.5 414.7 266.7 410 264.2C405.3 261.7 400.7 258.6 396.6 254.9C392.6 251.2 388.8 246.9 385.5 242.2C382.3 237.4 379.4 232.2 377.2 226.7C374.9 221.2 373.1 215.2 372 209.2C370.8 203.2 370.2 196.8 370.1 190.6C370 184.4 370.5 178 371.5 171.9C372.5 165.7 374.1 159.6 376.1 153.9C378.1 148.2 380.6 142.6 383.5 137.6C386.4 132.6 389.7 127.9 393.3 123.8C396.9 119.8 400.9 116.2 405 113.3C409.2 110.4 413.6 108 418.1 106.4C422.6 104.8 427.3 103.8 432 103.6Z" fill="#a0a0a0" filter="url(#sb0)"/>
<path d="M432.1 106.1C436.6 105.9 441.3 106.3 445.8 107.5C450.2 108.6 454.8 110.4 459 112.8C463.3 115.3 467.5 118.4 471.3 121.9C475.2 125.5 478.8 129.8 482.1 134.3C485.3 138.9 488.3 144 490.8 149.4C493.2 154.7 495.4 160.5 496.9 166.3C498.5 172.1 499.6 178.3 500.1 184.3C500.7 190.3 500.7 196.5 500.1 202.5C499.6 208.4 498.4 214.3 496.8 219.9C495.2 225.4 492.9 230.8 490.3 235.7C487.6 240.5 484.4 245.1 480.8 249.1C477.2 253 473.1 256.5 468.9 259.4C464.6 262.2 459.9 264.5 455.1 266.1C450.3 267.7 445.2 268.6 440.3 268.9C435.3 269.1 430.2 268.7 425.3 267.6C420.4 266.5 415.4 264.7 410.9 262.3C406.3 259.9 401.9 256.8 398 253.2C394 249.6 390.3 245.4 387.2 240.8C384.1 236.3 381.3 231.1 379.1 225.8C376.9 220.4 375.2 214.6 374.1 208.8C373 202.9 372.4 196.7 372.3 190.7C372.2 184.6 372.7 178.4 373.7 172.5C374.6 166.5 376.2 160.6 378.1 155C380 149.5 382.5 144 385.2 139.2C388 134.3 391.3 129.7 394.7 125.8C398.2 121.8 402 118.3 406 115.5C410 112.7 414.4 110.4 418.7 108.8C423 107.3 427.6 106.3 432.1 106.1Z" fill="#161616" filter="url(#sb0)"/>
<g filter="url(#sb0)">
<path d="M432.2 107.6C436.6 107.4 441.1 107.8 445.5 108.9C449.9 110 454.3 111.8 458.5 114.2C462.6 116.6 466.7 119.6 470.5 123.2C474.2 126.7 477.8 130.8 481 135.3C484.2 139.8 487.1 144.8 489.5 150.1C491.9 155.3 494 161 495.5 166.7C497 172.4 498.1 178.5 498.6 184.4C499.1 190.3 499.2 196.4 498.6 202.2C498.1 208 497 213.9 495.4 219.3C493.8 224.7 491.6 230 489 234.8C486.4 239.6 483.3 244.1 479.8 247.9C476.3 251.8 472.3 255.3 468.1 258.1C463.9 260.9 459.3 263.1 454.7 264.7C450 266.2 445.1 267.2 440.2 267.4C435.3 267.6 430.3 267.2 425.5 266.1C420.7 265 415.9 263.3 411.5 260.9C407.1 258.5 402.7 255.5 398.9 252C395 248.5 391.4 244.3 388.4 239.8C385.3 235.3 382.6 230.3 380.5 225C378.3 219.8 376.7 214.1 375.6 208.4C374.4 202.6 373.8 196.6 373.8 190.6C373.7 184.7 374.2 178.6 375.1 172.7C376.1 166.9 377.6 161 379.4 155.6C381.3 150.1 383.7 144.8 386.4 140C389.1 135.3 392.3 130.8 395.7 126.9C399.1 123 402.8 119.6 406.7 116.8C410.6 114 414.8 111.8 419.1 110.3C423.3 108.7 427.8 107.8 432.2 107.6Z" fill="#a2a2a2"/>
<g clip-path="url(#axbrain)">
<path d="M473.7 134.9C474 138.9 475.6 149.9 475.5 159.2C475.3 168.4 473.6 181.2 472.8 190.4C472.1 199.7 472 206.9 471.1 214.7C470.2 222.5 470 230.6 467.6 237.3C465.3 243.9 459 251.8 457.2 254.7M397.3 134.9C396.7 138.9 394.3 149.3 393.9 159.2C393.4 169 393.7 184.6 394.7 193.9C395.7 203.1 397.3 207.5 399.9 214.7C402.5 222 406.3 230.9 410.3 237.3C414.4 243.7 421.9 250.3 424.2 252.9" fill="none" stroke="#d6d6d6" stroke-width="9" stroke-linecap="round" stroke-linejoin="round" filter="url(#sb1)"/>
<path d="M472.8 190.4C474.9 189.8 481.5 186.9 485 186.9C488.5 186.9 492.2 189.8 493.7 190.4M472 206C474 206.3 480.4 207.8 484.1 207.8C487.9 207.8 492.8 206.3 494.5 206M470.2 223.4C472.1 224.3 478.2 227.5 481.5 228.6C484.9 229.8 488.8 230.1 490.2 230.3M466.8 239C468.4 240.2 473.6 244.2 476.3 246C479.1 247.7 482.1 248.9 483.3 249.4M459 252.9 L464.2 261.6M474.6 162.6C476.6 162.1 483.3 158.9 486.7 159.2C490.2 159.5 494 163.5 495.4 164.4M474.9 145.3C476.6 144.4 482.2 140.6 485 140.1C487.8 139.5 490.8 141.5 491.9 141.8M473.7 134.9C473.3 132.8 472.7 126.2 471.1 122.7C469.5 119.2 465.3 115.5 464.2 114M395.6 197.4C393.7 197.1 387.5 195.3 384.3 195.6C381.1 195.9 377.8 198.5 376.5 199.1M399.1 213C397.2 213.3 391.1 214 387.8 214.7C384.5 215.4 380.5 216.9 379.1 217.3M404.3 226.9C402.4 227.7 396 230.6 393 232.1C389.9 233.5 387.2 235 386 235.6M412.1 239C410.6 240.5 405.9 245.7 403.4 247.7C400.9 249.7 398.3 250.6 397.3 251.2M422.5 252 L417.3 261.6M394.4 162.6C392.4 162.1 385.8 158.9 382.6 159.2C379.3 159.5 376.1 163.5 374.8 164.4M395.6 145.3C394 144.4 388.8 140.6 386 140.1C383.3 139.5 380.3 141.5 379.1 141.8M397.3 134.9C398 132.8 399.5 126.2 401.7 122.7C403.8 119.2 408.9 115.5 410.3 114" fill="none" stroke="#d2d2d2" stroke-width="4.6" stroke-linecap="round" stroke-linejoin="round" filter="url(#sb1)"/>
<path d="M412.1 209.5C413 211.8 415.3 220.2 417.3 223.4C419.3 226.6 423.1 227.7 424.2 228.6M457.2 223.4C458.1 224.8 462.4 229.2 462.4 232.1C462.4 235 459.2 238.7 457.2 240.8C455.2 242.8 451.4 243.7 450.3 244.2M429.4 239C430.3 240.2 433.5 243.4 434.7 246C435.8 248.6 436.1 253.2 436.4 254.7M446.8 237.3C446.5 239 444.8 244.5 445.1 247.7C445.4 250.9 448 254.9 448.5 256.4" fill="none" stroke="#cfcfcf" stroke-width="3.2" stroke-linecap="round" stroke-linejoin="round" filter="url(#sb0)"/>
<path d="M491.9 197.4 L481.5 198.2M497.2 216.5 L485 217.3M494.5 237.3 L482.4 237.3M481.5 256.4 L472.8 251.2M465.9 266.8 L462.4 258.1M372.2 206 L384.3 206M375.6 226.9 L387.8 225.1M386 244.2 L396.5 240.8M399.9 258.1 L406.9 251.2M419 268.5 L420.8 259.9M493.7 176.5 L483.3 174.8M491.9 152.2 L481.5 150.5M375.6 176.5 L386 174.8M377.4 152.2 L387.8 150.5M406.9 197.4C407.2 200.3 406.9 208.9 408.6 214.7C410.3 220.5 414.4 227.5 417.3 232.1C420.2 236.7 424.5 240.8 426 242.5M464.2 200.8 L465.9 211.2" fill="none" stroke="#5a5a5a" stroke-width="1.4" stroke-linecap="round" stroke-linejoin="round" filter="url(#sb0)"/>
<path d="M441.6 232.1C441.5 235 441.1 243.1 441.2 249.4C441.4 255.8 442.1 266.8 442.3 270.3" fill="none" stroke="#4a4a4a" stroke-width="1.5" stroke-linecap="round" stroke-linejoin="round" filter="url(#sb0)"/>
<path d="M433.8 110.6C433.9 114.9 434.3 127.9 434.7 136.6C435 145.3 435.5 158.3 435.7 162.6" fill="none" stroke="#4a4a4a" stroke-width="1.5" stroke-linecap="round" stroke-linejoin="round" filter="url(#sb0)"/>
<path d="M426.8 202.2C428 201.4 433.2 206 436.4 206C439.6 206 444.5 200.8 445.9 202.2C447.4 203.7 445.8 210.8 445.1 214.7C444.3 218.6 442.8 223.2 441.6 225.5C440.4 227.7 439.4 229.2 438.1 228.3C436.8 227.3 435.2 222.8 433.8 219.9C432.3 217.1 430.6 214.2 429.4 211.2C428.3 208.3 425.7 203.1 426.8 202.2Z" fill="#3a3a3a"/>
<path d="M463.5 209.5C464 208.5 466.5 209.7 467.3 211.2C468 212.8 468.5 218 468 219.1C467.5 220.1 464.9 218.9 464.2 217.3C463.4 215.7 463 210.5 463.5 209.5Z" fill="#555"/>
<path d="M404.3 199.1C405.4 197.7 410.2 199.4 412.1 200.8C414 202.3 415.8 205.5 415.6 207.8C415.3 210.1 412 214.4 410.3 214.7C408.7 215 406.5 212.1 405.5 209.5C404.5 206.9 403.2 200.5 404.3 199.1Z" fill="#8a8a8a" filter="url(#sb1)"/>
</g></g>
</svg>
<svg class="a" style="left:631px;top:56px" width="393" height="245" viewBox="631 56 393 245">
<defs><linearGradient id="bg3" x1="0" y1="0" x2="0" y2="1"><stop offset="0" stop-color="#7478be"/><stop offset="1" stop-color="#c1c3e8"/></linearGradient><radialGradient id="hg" cx=".5" cy=".42" r=".62"><stop offset="0" stop-color="#363636"/><stop offset=".6" stop-color="#2c2c2c"/><stop offset="1" stop-color="#1b1b1b"/></radialGradient><filter id="fb4" x="-30%" y="-30%" width="160%" height="160%"><feGaussianBlur stdDeviation="5"/></filter><filter id="spk" x="0" y="0" width="100%" height="100%"><feTurbulence type="fractalNoise" baseFrequency=".8" numOctaves="2" seed="4"/><feColorMatrix type="matrix" values="0 0 0 0 1  0 0 0 0 1  0 0 0 0 1  2.2 0 0 0 -1"/></filter><clipPath id="v3clip"><rect x="631" y="56" width="393" height="245"/></clipPath><clipPath id="headclip"><path d="M827.9 76.7C835.4 76.7 843.3 77.2 850.7 79.2C858.1 81.3 865.7 84.6 872.2 88.7C878.6 92.9 884.7 98.2 889.4 104.2C894.1 110.2 897.9 117.5 900.6 124.9C903.3 132.3 904.8 140.7 905.8 148.6C906.8 156.4 906.8 164 906.6 172.2C906.5 180.5 905.9 189.4 904.9 198.1C903.9 206.7 902.1 216 900.6 223.9C899.1 231.8 897.7 239 895.9 245.4C894 251.9 892.1 256.9 889.4 262.6C886.8 268.4 883.2 274.5 879.9 279.8C876.7 285.2 872.4 289.2 870 294.9C867.7 300.7 880.4 311.1 865.7 314.3C851 317.5 796.4 317.5 781.8 314.3C767.2 311.1 780.5 300.7 778.3 294.9C776.2 289.2 771.7 285.2 768.9 279.8C766 274.5 763.3 268.4 761.1 262.6C759 256.9 757.4 251.9 756 245.4C754.5 239 753.5 231.8 752.5 223.9C751.6 216 750.9 206.7 750.4 198.1C749.9 189.4 749.4 180.5 749.5 172.2C749.6 164 750.1 156.4 751.2 148.6C752.4 140.7 753.8 132.3 756.4 124.9C759 117.5 762.1 110.2 766.7 104.2C771.3 98.2 777.5 92.9 783.9 88.7C790.4 84.6 798.1 81.3 805.5 79.2C812.8 77.2 820.3 76.7 827.9 76.7Z"/></clipPath></defs>
<rect x="631" y="56" width="393" height="245" fill="url(#bg3)"/>
<g clip-path="url(#v3clip)">
<g fill="none" stroke="#c05ae6" stroke-width=".9">
<rect x="713.8" y="64" width="228.60000000000002" height="228"/>
<rect x="751.7" y="102.5" width="152.29999999999995" height="153.5"/>
<path d="M713.8 64L751.7 102.5M942.4 64L904 102.5M713.8 292L751.7 256M942.4 292L904 256"/>
</g>
<text x="828.500" y="76.300" font-family="Liberation Sans, sans-serif" font-size="12" fill="#fff" text-anchor="middle">S</text>
<text x="724" y="182.500" font-family="Liberation Sans, sans-serif" font-size="12" fill="#fff" text-anchor="middle">R</text>
<text x="932.500" y="182.500" font-family="Liberation Sans, sans-serif" font-size="12" fill="#fff" text-anchor="middle">L</text>
<path d="M760 246L751 262 747 284 744 306H912L909 282 904 262 897 243Z" fill="#17171a" opacity=".93" filter="url(#sb2)"/>
<path d="M762 240L748 262 742 306H914L908 262 896 238Z" fill="#17171a" opacity=".3" filter="url(#sb3)"/>
<path d="M827.9 74.5C835.6 74.5 843.7 75.1 851.2 77.1C858.8 79.2 866.7 82.5 873.3 86.8C879.9 91 886.1 96.4 890.9 102.6C895.8 108.7 899.6 116.1 902.4 123.7C905.2 131.2 906.7 139.8 907.7 147.8C908.7 155.9 908.7 163.6 908.6 172C908.5 180.4 907.9 189.5 906.8 198.3C905.8 207.1 904 216.6 902.4 224.7C900.9 232.7 899.5 240 897.6 246.6C895.7 253.2 893.7 258.3 890.9 264.2C888.2 270 884.6 276.3 881.2 281.7C877.9 287.2 873.5 291.3 871.1 297.1C868.7 303 881.8 313.6 866.7 316.9C851.6 320.2 795.6 320.2 780.6 316.9C765.7 313.6 779.3 303 777.1 297.1C774.9 291.3 770.3 287.2 767.4 281.7C764.5 276.3 761.7 270 759.5 264.2C757.3 258.3 755.6 253.2 754.2 246.6C752.7 240 751.6 232.7 750.6 224.7C749.7 216.6 748.9 207.1 748.4 198.3C747.9 189.5 747.4 180.4 747.5 172C747.7 163.6 748.1 155.9 749.3 147.8C750.5 139.8 752 131.2 754.6 123.7C757.3 116.1 760.5 108.7 765.2 102.6C769.9 96.4 776.2 91 782.8 86.8C789.5 82.5 797.4 79.2 804.9 77.1C812.4 75.1 820.1 74.5 827.9 74.5Z" fill="#000" opacity=".35" filter="url(#sb2)"/>
<path d="M827.9 76.7C835.4 76.7 843.3 77.2 850.7 79.2C858.1 81.3 865.7 84.6 872.2 88.7C878.6 92.9 884.7 98.2 889.4 104.2C894.1 110.2 897.9 117.5 900.6 124.9C903.3 132.3 904.8 140.7 905.8 148.6C906.8 156.4 906.8 164 906.6 172.2C906.5 180.5 905.9 189.4 904.9 198.1C903.9 206.7 902.1 216 900.6 223.9C899.1 231.8 897.7 239 895.9 245.4C894 251.9 892.1 256.9 889.4 262.6C886.8 268.4 883.2 274.5 879.9 279.8C876.7 285.2 872.4 289.2 870 294.9C867.7 300.7 880.4 311.1 865.7 314.3C851 317.5 796.4 317.5 781.8 314.3C767.2 311.1 780.5 300.7 778.3 294.9C776.2 289.2 771.7 285.2 768.9 279.8C766 274.5 763.3 268.4 761.1 262.6C759 256.9 757.4 251.9 756 245.4C754.5 239 753.5 231.8 752.5 223.9C751.6 216 750.9 206.7 750.4 198.1C749.9 189.4 749.4 180.5 749.5 172.2C749.6 164 750.1 156.4 751.2 148.6C752.4 140.7 753.8 132.3 756.4 124.9C759 117.5 762.1 110.2 766.7 104.2C771.3 98.2 777.5 92.9 783.9 88.7C790.4 84.6 798.1 81.3 805.5 79.2C812.8 77.2 820.3 76.7 827.9 76.7Z" fill="url(#hg)" filter="url(#sb0)"/>
<g clip-path="url(#headclip)">
<ellipse cx="829.1433491175204" cy="142.09556607834696" rx="38" ry="30" fill="#484848" opacity=".7" filter="url(#fb4)"/>
<ellipse cx="829.1433491175204" cy="155.8708566508825" rx="22" ry="7" fill="#545454" opacity=".7" filter="url(#sb3)"/>
<ellipse cx="781.7907877744296" cy="223.88635385277658" rx="20" ry="24" fill="#3c3c3c" opacity=".7" filter="url(#fb4)"/>
<ellipse cx="872.1911321566939" cy="221.73396470081792" rx="22" ry="26" fill="#404040" opacity=".7" filter="url(#fb4)"/>
<ellipse cx="791.2613000430478" cy="185.14334911752044" rx="19" ry="8" fill="#181818" opacity=".9" filter="url(#sb2)"/>
<ellipse cx="858.4158415841584" cy="185.14334911752044" rx="20" ry="8" fill="#181818" opacity=".9" filter="url(#sb2)"/>
<ellipse cx="788.2479552303056" cy="184.28239345673697" rx="13" ry="4.500" fill="#343434" filter="url(#sb1)"/>
<ellipse cx="857.1244080929832" cy="184.28239345673697" rx="14" ry="4.500" fill="#343434" filter="url(#sb1)"/>
<path d="M768.9 187.3C771.4 188.2 778.6 192.4 783.9 192.9C789.3 193.4 798.3 190.7 801.2 190.3" fill="none" stroke="#0c0c0c" stroke-width="1.300" filter="url(#sb0)"/>
<path d="M842.1 190.3C844.9 190.9 853.4 194.3 859.3 193.8C865.2 193.3 874.3 188.4 877.4 187.3" fill="none" stroke="#0c0c0c" stroke-width="1.300" filter="url(#sb0)"/>
<path d="M812.8 176.5C815.7 172.2 822.1 172.2 824.8 176.5C827.6 180.8 828.1 195.2 829.1 202.4C830.2 209.5 833.4 215.6 831.3 219.6C829.1 223.5 820.9 226 816.2 226C811.6 226 804.7 223.5 803.3 219.6C801.9 215.6 806 209.5 807.6 202.4C809.2 195.2 809.9 180.8 812.8 176.5Z" fill="#363636" opacity=".85" filter="url(#sb2)"/>
<path d="M796.9 221.7C798.1 221.6 804 226.8 807.6 228.2C811.2 229.6 814.4 230.7 818.4 230.3C822.3 230 828.6 227.8 831.3 226C834 224.2 834.7 218.9 834.3 219.6C834 220.3 832.5 227.8 829.1 230.3C825.8 232.9 819 234.9 814.1 234.6C809.2 234.4 802.7 231.2 799.9 229.1C797 226.9 795.6 221.9 796.9 221.7Z" fill="#141414" filter="url(#sb2)"/>
<path d="M799.9 185.1C802 179.4 807.2 178 808.5 180.8C809.8 183.7 809.1 195.9 807.6 202.4C806.2 208.8 801.9 217.4 799.9 219.6C797.9 221.7 795.6 221 795.6 215.3C795.6 209.5 797.7 190.9 799.9 185.1Z" fill="#161616" opacity=".8" filter="url(#sb2)"/>
<path d="M788.2 252.3C790.8 252.4 797.9 252.6 803.3 253.2C808.7 253.7 814.8 255.2 820.5 255.7C826.3 256.3 833.1 256.7 837.8 256.6C842.4 256.5 846.7 255.2 848.5 254.9" fill="none" stroke="#121212" stroke-width="3" filter="url(#sb1)"/>
<ellipse cx="818.3814033577271" cy="266.0731812311666" rx="24" ry="6" fill="#3a3a3a" opacity=".8" filter="url(#sb2)"/>
<ellipse cx="822.6861816616445" cy="290.6104175634955" rx="20" ry="9" fill="#444" opacity=".7" filter="url(#sb3)"/>
<ellipse cx="820.5337925096858" cy="277.69608265174344" rx="30" ry="8" fill="#141414" opacity=".7" filter="url(#sb3)"/>
<rect x="745" y="70" width="170" height="235" filter="url(#spk)" opacity=".16"/>
</g></g></svg>
<div class="a" style="left:630.500px;top:308px;width:1px;height:244px;background:#1e1e1e"></div>
<div class="bar" style="left:238px;top:49px;width:393px;height:7px;background:#f34a33"></div>
<div class="a" style="left:245px;top:49px;width:6px;height:7px;background:#f8806c"></div>
<div class="t" style="left:246px;top:49.9px;font-size:5.500px;color:#222;margin-top:0">R</div>
<div class="a" style="left:239.5px;top:51.8px;width:3px;height:1.500px;background:rgba(0,0,0,.45);border-radius:1px"></div>
<div class="a" style="left:253.5px;top:50.5px;width:3px;height:4px;background:rgba(0,0,0,.45);border-radius:1.500px"></div>
<div class="a" style="left:261px;top:51.8px;width:191.60000000000002px;height:2px;background:#7ba0d2"></div>
<div class="a" style="left:452.6px;top:51.8px;width:144.89999999999998px;height:2px;background:#dcdcdc"></div>
<div class="a" style="left:450.6px;top:50px;width:4px;height:5.500px;background:#f2f2f2;border:.5px solid #aaa;border-radius:1px"></div>
<div class="a" style="left:599.5px;top:49px;width:31.5px;height:7px;background:#f8806c"></div>
<div class="t" style="left:601.5px;top:50.4px;font-size:4.800px;letter-spacing:-.1px;color:#333;margin-top:0">S: 16.158mm</div>
<div class="bar" style="left:238px;top:300.5px;width:393px;height:7.5px;background:#edd54c"></div>
<div class="a" style="left:245px;top:300.5px;width:6px;height:7.5px;background:#fbe985"></div>
<div class="t" style="left:246px;top:301.4px;font-size:5.500px;color:#222;margin-top:0">Y</div>
<div class="a" style="left:239.5px;top:303.3px;width:3px;height:1.500px;background:rgba(0,0,0,.45);border-radius:1px"></div>
<div class="a" style="left:253.5px;top:302.0px;width:3px;height:4px;background:rgba(0,0,0,.45);border-radius:1.500px"></div>
<div class="a" style="left:261px;top:303.3px;width:170px;height:2px;background:#7ba0d2"></div>
<div class="a" style="left:431px;top:303.3px;width:166.5px;height:2px;background:#dcdcdc"></div>
<div class="a" style="left:429px;top:301.5px;width:4px;height:5.500px;background:#f2f2f2;border:.5px solid #aaa;border-radius:1px"></div>
<div class="a" style="left:599.5px;top:300.5px;width:31.5px;height:7.5px;background:#fbe985"></div>
<div class="t" style="left:601.5px;top:301.9px;font-size:4.800px;letter-spacing:-.1px;color:#333;margin-top:0">R: 0.717mm</div>
<div class="bar" style="left:631px;top:300.5px;width:393px;height:7.5px;background:#6eb04b"></div>
<div class="a" style="left:638px;top:300.5px;width:6px;height:7.5px;background:#8ee862"></div>
<div class="t" style="left:639px;top:301.4px;font-size:5.500px;color:#222;margin-top:0">G</div>
<div class="a" style="left:632.5px;top:303.3px;width:3px;height:1.500px;background:rgba(0,0,0,.45);border-radius:1px"></div>
<div class="a" style="left:646.5px;top:302.0px;width:3px;height:4px;background:rgba(0,0,0,.45);border-radius:1.500px"></div>
<div class="a" style="left:654px;top:303.3px;width:168.60000000000002px;height:2px;background:#7ba0d2"></div>
<div class="a" style="left:822.6px;top:303.3px;width:167.39999999999998px;height:2px;background:#dcdcdc"></div>
<div class="a" style="left:820.6px;top:301.5px;width:4px;height:5.500px;background:#f2f2f2;border:.5px solid #aaa;border-radius:1px"></div>
<div class="a" style="left:992px;top:300.5px;width:32px;height:7.5px;background:#8ee862"></div>
<div class="t" style="left:994px;top:301.9px;font-size:4.800px;letter-spacing:-.1px;color:#333;margin-top:0">A: 30.110mm</div>
<div class="bar" style="left:631px;top:49px;width:393px;height:7px;background:#7283ea"></div>
<div class="a" style="left:638px;top:49px;width:6.500px;height:7px;background:#b4bcf8"></div>
<div class="t" style="left:639.500px;top:49.900px;font-size:5.500px;color:#222;margin-top:0">1</div>
<div class="a" style="left:633px;top:51.800px;width:3px;height:1.500px;background:rgba(0,0,0,.5);border-radius:1px"></div>
<div class="a" style="left:646.500px;top:50.500px;width:4px;height:4px;background:rgba(40,40,90,.4);border-radius:2px"></div>
<div class="lbl" style="left:239.500px;top:285.800px">B: 4: t1_ MPRage_iso_sag_</div>
<div class="lbl" style="left:239.500px;top:536.800px">B: 4: t1_ MPRage_iso_sag_</div>
<div class="lbl" style="left:632.500px;top:536.800px">B: 4: t1_ MPRage_iso_sag_</div>
<div class="a" style="left:1011.500px;top:553px;width:11.500px;height:11.500px;border:1px solid #d8d8d8;border-radius:1px;background:#f6f6f6"></div>
<div class="a" style="left:1012.700px;top:554.500px;width:8.600px;height:8.600px;border-radius:50%;background:#d8302a;color:#fff;font-size:7px;line-height:8.600px;text-align:center;font-weight:bold">&#215;</div>
</div>

<!-- callouts -->
<div id="callouts">
<svg class="a" style="left:0;top:0" width="1024" height="576" viewBox="0 0 1024 576">
<path d="M173.800 190V90.300H221L175.400 40.300 295 90.300H465V190Z" fill="#fff" stroke="#1fa5ba" stroke-width="3.300" stroke-linejoin="miter" stroke-miterlimit="4"/>
<path d="M45 281.500V219.500H78L17.200 119.200 134 219.500H257.500V281.500Z" fill="#fff" stroke="#1fa5ba" stroke-width="3.200" stroke-linejoin="miter" stroke-miterlimit="4"/>
</svg>
<div class="t ct" id="ct1" style="left:226.200px;top:116px;font-family:'DejaVu Sans','Liberation Sans',sans-serif;font-weight:200;font-size:24.700px;color:#262626;-webkit-text-stroke:.28px #262626;transform-origin:0 0;transform:scaleX(.870)">Switch to Volume</div>
<div class="t ct" id="ct2" style="left:263.900px;top:146.300px;font-family:'DejaVu Sans','Liberation Sans',sans-serif;font-weight:200;font-size:24.700px;color:#262626;-webkit-text-stroke:.28px #262626;transform-origin:0 0;transform:scaleX(.885)">Rendering</div>
<div class="t ct" id="ct3" style="left:64.500px;top:240.600px;font-family:'DejaVu Sans','Liberation Sans',sans-serif;font-weight:200;font-size:24.700px;color:#262626;-webkit-text-stroke:.28px #262626;transform-origin:0 0;transform:scaleX(.883)">Turn on 3D View</div>
</div>

</body></html>
